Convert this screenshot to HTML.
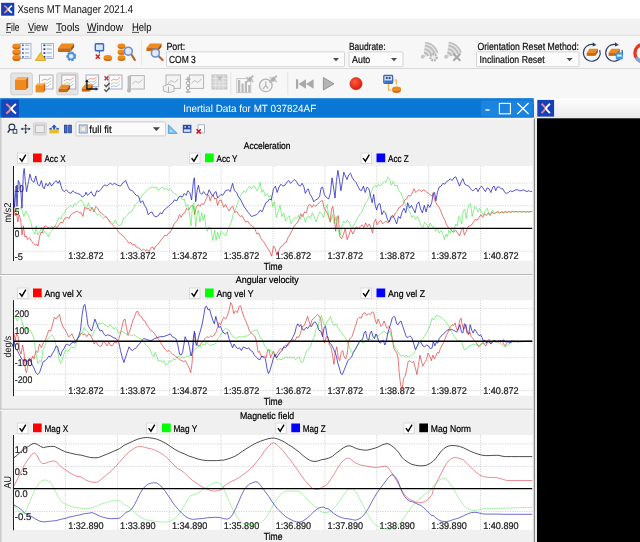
<!DOCTYPE html>
<html><head><meta charset="utf-8"><title>Xsens MT Manager 2021.4</title>
<style>
html,body{margin:0;padding:0;background:#f0f0f0;}
body{width:640px;height:542px;overflow:hidden;}
svg{display:block;font-family:"Liberation Sans",sans-serif;will-change:transform;text-rendering:geometricPrecision;}
</style></head><body>
<svg width="640" height="542" viewBox="0 0 640 542">
<rect x="0" y="0" width="640" height="542" fill="#f0f0f0"/>
<rect x="0" y="0" width="640" height="18.8" fill="#ffffff"/>
<rect x="0" y="18.8" width="640" height="16.6" fill="#f1f1f1"/>
<rect x="0" y="35.4" width="640" height="62.6" fill="#f7f7f7"/>
<line x1="0" y1="35.3" x2="640" y2="35.3" stroke="#e0e0e0" stroke-width="1"/>
<line x1="0" y1="68.5" x2="640" y2="68.5" stroke="#dadada" stroke-width="1"/>
<rect x="1.1" y="2.8" width="13.2" height="12.9" fill="#1440b8"/>
<path d="M4.35,5.55 Q7.01,7.58 7.95,9.25 Q7.01,10.91 4.35,12.95" fill="none" stroke="#e88a90" stroke-width="1.60"/>
<path d="M11.95,5.55 Q9.29,7.58 8.35,9.25 Q9.29,10.91 11.95,12.95" fill="none" stroke="#ffffff" stroke-width="1.60"/>
<text x="17.4" y="13.4" font-size="11.2" fill="#1a1a1a" stroke="#1a1a1a" stroke-width="0.05" text-anchor="start" textLength="115.6" lengthAdjust="spacingAndGlyphs">Xsens MT Manager 2021.4</text>
<text x="6" y="31.4" font-size="11.2" fill="#111" stroke="#111" stroke-width="0.05" text-anchor="start" textLength="13.5" lengthAdjust="spacingAndGlyphs">File</text>
<text x="28" y="31.4" font-size="11.2" fill="#111" stroke="#111" stroke-width="0.05" text-anchor="start" textLength="20" lengthAdjust="spacingAndGlyphs">View</text>
<text x="56" y="31.4" font-size="11.2" fill="#111" stroke="#111" stroke-width="0.05" text-anchor="start" textLength="23.5" lengthAdjust="spacingAndGlyphs">Tools</text>
<text x="87" y="31.4" font-size="11.2" fill="#111" stroke="#111" stroke-width="0.05" text-anchor="start" textLength="36" lengthAdjust="spacingAndGlyphs">Window</text>
<text x="132" y="31.4" font-size="11.2" fill="#111" stroke="#111" stroke-width="0.05" text-anchor="start" textLength="19.5" lengthAdjust="spacingAndGlyphs">Help</text>
<line x1="6" y1="32.4" x2="11" y2="32.4" stroke="#222" stroke-width="0.8"/>
<line x1="28" y1="32.4" x2="34.5" y2="32.4" stroke="#222" stroke-width="0.8"/>
<line x1="56" y1="32.4" x2="61.5" y2="32.4" stroke="#222" stroke-width="0.8"/>
<line x1="87" y1="32.4" x2="96.5" y2="32.4" stroke="#222" stroke-width="0.8"/>
<line x1="132" y1="32.4" x2="139" y2="32.4" stroke="#222" stroke-width="0.8"/>
<text x="166.4" y="49.6" font-size="10.3" fill="#111" stroke="#111" stroke-width="0.22" text-anchor="start" textLength="18.8" lengthAdjust="spacingAndGlyphs">Port:</text>
<rect x="166.5" y="51.9" width="178" height="14.8" fill="#fcfcfc" stroke="#d4d4d4" stroke-width="1" rx="1"/>
<path d="M333,57.9 h6 l-3,3.3 z" fill="#4a4a4a"/>
<text x="169" y="62.7" font-size="10.1" fill="#111" stroke="#111" stroke-width="0.22" text-anchor="start" textLength="26.8" lengthAdjust="spacingAndGlyphs">COM 3</text>
<text x="348.9" y="49.6" font-size="10.3" fill="#111" stroke="#111" stroke-width="0.22" text-anchor="start" textLength="36.6" lengthAdjust="spacingAndGlyphs">Baudrate:</text>
<rect x="349.0" y="51.9" width="54" height="14.8" fill="#fcfcfc" stroke="#d4d4d4" stroke-width="1" rx="1"/>
<path d="M391,57.9 h6 l-3,3.3 z" fill="#4a4a4a"/>
<text x="352" y="62.7" font-size="10.1" fill="#111" stroke="#111" stroke-width="0.22" text-anchor="start" textLength="18.3" lengthAdjust="spacingAndGlyphs">Auto</text>
<text x="477.4" y="49.6" font-size="10.3" fill="#111" stroke="#111" stroke-width="0.22" text-anchor="start" textLength="101.5" lengthAdjust="spacingAndGlyphs">Orientation Reset Method:</text>
<rect x="476.5" y="51.9" width="102.5" height="14.8" fill="#fcfcfc" stroke="#d4d4d4" stroke-width="1" rx="1"/>
<path d="M566.6,57.9 h6 l-3,3.3 z" fill="#4a4a4a"/>
<text x="479.6" y="62.7" font-size="10.1" fill="#111" stroke="#111" stroke-width="0.22" text-anchor="start" textLength="65" lengthAdjust="spacingAndGlyphs">Inclination Reset</text>
<rect x="20" y="43.5" width="11" height="15" fill="#f4f7fc" stroke="#9aa8c4" stroke-width="0.8"/>
<rect x="22" y="44.400000000000006" width="1.8" height="1.8" fill="#4a78c8"/>
<line x1="25" y1="45.2" x2="29.2" y2="45.2" stroke="#8fa4cc" stroke-width="1"/>
<rect x="22" y="48.26666666666667" width="1.8" height="1.8" fill="#4a78c8"/>
<line x1="25" y1="49.06666666666667" x2="29.2" y2="49.06666666666667" stroke="#8fa4cc" stroke-width="1"/>
<rect x="22" y="52.13333333333334" width="1.8" height="1.8" fill="#4a78c8"/>
<line x1="25" y1="52.93333333333334" x2="29.2" y2="52.93333333333334" stroke="#8fa4cc" stroke-width="1"/>
<rect x="22" y="56.00000000000001" width="1.8" height="1.8" fill="#4a78c8"/>
<line x1="25" y1="56.800000000000004" x2="29.2" y2="56.800000000000004" stroke="#8fa4cc" stroke-width="1"/>
<ellipse cx="16.5" cy="46.8" rx="4" ry="2.6" fill="#c96a10"/>
<ellipse cx="16.5" cy="45.6" rx="4" ry="2.1" fill="#f08a1c"/>
<ellipse cx="16.5" cy="52.599999999999994" rx="4" ry="2.6" fill="#c96a10"/>
<ellipse cx="16.5" cy="51.4" rx="4" ry="2.1" fill="#f08a1c"/>
<ellipse cx="16.5" cy="58.4" rx="4" ry="2.6" fill="#c96a10"/>
<ellipse cx="16.5" cy="57.2" rx="4" ry="2.1" fill="#f08a1c"/>
<rect x="41.5" y="43.5" width="12" height="15" fill="#f4f7fc" stroke="#9aa8c4" stroke-width="0.8"/>
<rect x="43.5" y="44.400000000000006" width="1.8" height="1.8" fill="#2a3f7a"/>
<line x1="46.5" y1="45.2" x2="51.7" y2="45.2" stroke="#8fa4cc" stroke-width="1"/>
<rect x="43.5" y="48.26666666666667" width="1.8" height="1.8" fill="#2a3f7a"/>
<line x1="46.5" y1="49.06666666666667" x2="51.7" y2="49.06666666666667" stroke="#8fa4cc" stroke-width="1"/>
<rect x="43.5" y="52.13333333333334" width="1.8" height="1.8" fill="#2a3f7a"/>
<line x1="46.5" y1="52.93333333333334" x2="51.7" y2="52.93333333333334" stroke="#8fa4cc" stroke-width="1"/>
<rect x="43.5" y="56.00000000000001" width="1.8" height="1.8" fill="#2a3f7a"/>
<line x1="46.5" y1="56.800000000000004" x2="51.7" y2="56.800000000000004" stroke="#8fa4cc" stroke-width="1"/>
<path d="M40.6,52.6 L45.8,60.4 L35.4,60.4 Z" fill="#f4c430" stroke="#d09a10" stroke-width="0.8" stroke-linejoin="round"/>
<path d="M61.5,43.5 L74,43.5 L70.5,48.175 L58,48.175 Z" fill="#f08a1c"/>
<path d="M58,48.175 L70.5,48.175 L70.5,52.0 L58,52.0 Z" fill="#c96a10"/>
<path d="M70.5,48.175 L74,43.5 L74,47.325 L70.5,52.0 Z" fill="#a85808"/>
<circle cx="71.2" cy="56.3" r="3.6" fill="none" stroke="#4a8fe0" stroke-width="2.6" stroke-dasharray="2.1 1.2"/>
<circle cx="71.2" cy="56.3" r="3.2" fill="#cfe2f8" stroke="#4a8fe0" stroke-width="1.6"/>
<circle cx="71.2" cy="56.3" r="1.2" fill="#f7f7f7"/>
<rect x="95.3" y="43.8" width="8.2" height="7" fill="#d4e6fa" stroke="#3a66c4" stroke-width="1.4" rx="0.8"/>
<line x1="99.4" y1="51" x2="99.4" y2="53.5" stroke="#3a66c4" stroke-width="1.2"/>
<path d="M95.8,54.6 L99.8,58.8 M99.8,54.6 L95.8,58.8" stroke="#d42020" stroke-width="1.5"/>
<ellipse cx="107.8" cy="58.4" rx="4.1" ry="2.7" fill="#c96a10"/>
<ellipse cx="107.8" cy="57.2" rx="4.1" ry="2.2" fill="#f08a1c"/>
<ellipse cx="121.5" cy="46.599999999999994" rx="3.8" ry="2.5" fill="#c96a10"/>
<ellipse cx="121.5" cy="45.4" rx="3.8" ry="2.0" fill="#f08a1c"/>
<ellipse cx="121.5" cy="52.599999999999994" rx="3.8" ry="2.5" fill="#c96a10"/>
<ellipse cx="121.5" cy="51.4" rx="3.8" ry="2.0" fill="#f08a1c"/>
<ellipse cx="121.5" cy="58.4" rx="3.8" ry="2.5" fill="#c96a10"/>
<ellipse cx="121.5" cy="57.2" rx="3.8" ry="2.0" fill="#f08a1c"/>
<line x1="131.10000000000002" y1="54.0" x2="134.8" y2="59.8" stroke="#b0683a" stroke-width="2.2" stroke-linecap="round"/>
<circle cx="128.3" cy="51.2" r="4" fill="#dce8f8" fill-opacity="0.85" stroke="#6a8fd0" stroke-width="1.6"/>
<line x1="141.5" y1="40" x2="141.5" y2="65" stroke="#e4e4e4" stroke-width="1"/>
<path d="M150.0,43.5 L161.5,43.5 L158.0,47.625 L146.5,47.625 Z" fill="#f08a1c"/>
<path d="M146.5,47.625 L158.0,47.625 L158.0,51.0 L146.5,51.0 Z" fill="#c96a10"/>
<path d="M158.0,47.625 L161.5,43.5 L161.5,46.875 L158.0,51.0 Z" fill="#a85808"/>
<line x1="158.20000000000002" y1="55.8" x2="162.6" y2="60" stroke="#b0683a" stroke-width="2.2" stroke-linecap="round"/>
<circle cx="155.4" cy="53" r="4" fill="#dce8f8" fill-opacity="0.85" stroke="#6a8fd0" stroke-width="1.6"/>
<path d="M423.3,57.5 L425.2,42.1 A15.6,15.6 0 0 1 438.3,53.1 Z" fill="#e2e2e2"/>
<path d="M424.0,52.5 A5,5 0 0 1 428.1,56.0" fill="none" stroke="#bdbdbd" stroke-width="1.8"/>
<path d="M424.5,49.1 A8.5,8.5 0 0 1 431.4,54.9" fill="none" stroke="#bdbdbd" stroke-width="1.8"/>
<path d="M425.0,45.6 A12,12 0 0 1 434.7,53.8" fill="none" stroke="#bdbdbd" stroke-width="1.8"/>
<path d="M425.4,42.5 A15.2,15.2 0 0 1 437.7,52.8" fill="none" stroke="#bdbdbd" stroke-width="1.6"/>
<circle cx="422.7" cy="56.7" r="2" fill="#c6c6c6"/>
<circle cx="433.5" cy="57.4" r="3.1" fill="#ececec" stroke="#b0b0b0" stroke-width="2.2" stroke-dasharray="1.7 0.9"/>
<path d="M446.7,57.5 L448.6,42.1 A15.6,15.6 0 0 1 461.7,53.1 Z" fill="#e2e2e2"/>
<path d="M447.4,52.5 A5,5 0 0 1 451.4,56.0" fill="none" stroke="#bdbdbd" stroke-width="1.8"/>
<path d="M447.9,49.1 A8.5,8.5 0 0 1 454.8,54.9" fill="none" stroke="#bdbdbd" stroke-width="1.8"/>
<path d="M448.4,45.6 A12,12 0 0 1 458.1,53.8" fill="none" stroke="#bdbdbd" stroke-width="1.8"/>
<path d="M448.8,42.5 A15.2,15.2 0 0 1 461.1,52.8" fill="none" stroke="#bdbdbd" stroke-width="1.6"/>
<circle cx="446.09999999999997" cy="56.7" r="2" fill="#c6c6c6"/>
<path d="M453.3,53.8 L460.3,60.8 M460.3,53.8 L453.3,60.8" stroke="#a8a8a8" stroke-width="2.2"/>
<path d="M593.26,44.53 A8.4,8.4 0 1 0 599.69,49.93" fill="none" stroke="#2c3e66" stroke-width="1.15"/>
<path d="M592.66,42.33 L596.46,45.03 L592.66,46.53 Z" fill="#2c3e66"/>
<path d="M589.5,48.7 L597.9000000000001,48.7 L595.1000000000001,52.660000000000004 L586.7,52.660000000000004 Z" fill="#f08a1c"/>
<path d="M586.7,52.660000000000004 L595.1000000000001,52.660000000000004 L595.1000000000001,55.900000000000006 L586.7,55.900000000000006 Z" fill="#c96a10"/>
<path d="M595.1000000000001,52.660000000000004 L597.9000000000001,48.7 L597.9000000000001,51.940000000000005 L595.1000000000001,55.900000000000006 Z" fill="#a85808"/>
<path d="M615.56,44.53 A8.4,8.4 0 1 0 621.99,49.93" fill="none" stroke="#2c3e66" stroke-width="1.15"/>
<path d="M614.96,42.33 L618.76,45.03 L614.96,46.53 Z" fill="#2c3e66"/>
<path d="M611.4,48.7 L619.8000000000001,48.7 L617.0000000000001,52.660000000000004 L608.6,52.660000000000004 Z" fill="#f08a1c"/>
<path d="M608.6,52.660000000000004 L617.0000000000001,52.660000000000004 L617.0000000000001,55.900000000000006 L608.6,55.900000000000006 Z" fill="#c96a10"/>
<path d="M617.0000000000001,52.660000000000004 L619.8000000000001,48.7 L619.8000000000001,51.940000000000005 L617.0000000000001,55.900000000000006 Z" fill="#a85808"/>
<rect x="615.8" y="52.4" width="7" height="7" fill="#3a9ae8" rx="0.8"/>
<rect x="617" y="54.6" width="4.6" height="2" fill="#e8f2fc"/>
<circle cx="643.5" cy="53" r="8.6" fill="none" stroke="#e23a26" stroke-width="3.4"/>
<path d="M636.2,57.5 A8.6,8.6 0 0 0 643.5,61.6" fill="none" stroke="#7fa8e0" stroke-width="3.4"/>
<rect x="10.8" y="73" width="21.5" height="21.8" fill="#e4e4e4" stroke="#cfcfcf" stroke-width="1" rx="1.5"/>
<path d="M17.64,77 L28.2,77 L25.56,79.86 L15,79.86 Z" fill="#f8b060"/>
<path d="M15,79.86 L25.56,79.86 L25.56,90 L15,90 Z" fill="#f08a1c"/>
<path d="M25.56,79.86 L28.2,77 L28.2,87.14 L25.56,90 Z" fill="#c96a10"/>
<rect x="39.5" y="75" width="13.5" height="14" fill="#fbfbfd" stroke="#a9adb8" stroke-width="1"/>
<path d="M41.5,80.88 L44.225,79.2 L47.6,80.04 L51.0,77.52" fill="none" stroke="#e8a090" stroke-width="1"/>
<path d="M41.5,84.24 L44.225,82.84 L47.6,83.4 L51.0,80.6" fill="none" stroke="#b8d8a0" stroke-width="1"/>
<path d="M41.5,87.03999999999999 L44.225,85.92 L47.6,86.48 L51.0,83.68" fill="none" stroke="#a8c4e8" stroke-width="1"/>
<path d="M37.52,83.2 L45.2,83.2 L43.28,85.224 L35.6,85.224 Z" fill="#f8b060"/>
<path d="M35.6,85.224 L43.28,85.224 L43.28,92.4 L35.6,92.4 Z" fill="#f08a1c"/>
<path d="M43.28,85.224 L45.2,83.2 L45.2,90.376 L43.28,92.4 Z" fill="#c96a10"/>
<rect x="56.8" y="73" width="21.2" height="21.8" fill="#e4e4e4" stroke="#cfcfcf" stroke-width="1" rx="1.5"/>
<rect x="61.8" y="75" width="14" height="14" fill="#fbfbfd" stroke="#a9adb8" stroke-width="1"/>
<path d="M63.8,80.88 L66.7,79.2 L70.2,80.04 L73.8,77.52" fill="none" stroke="#e8a090" stroke-width="1"/>
<path d="M63.8,84.24 L66.7,82.84 L70.2,83.4 L73.8,80.6" fill="none" stroke="#b8d8a0" stroke-width="1"/>
<path d="M63.8,87.03999999999999 L66.7,85.92 L70.2,86.48 L73.8,83.68" fill="none" stroke="#a8c4e8" stroke-width="1"/>
<path d="M61.6,84.8 L70.1,84.8 L67.1,88.87 L58.6,88.87 Z" fill="#f08a1c"/>
<path d="M58.6,88.87 L67.1,88.87 L67.1,92.2 L58.6,92.2 Z" fill="#c96a10"/>
<path d="M67.1,88.87 L70.1,84.8 L70.1,88.13 L67.1,92.2 Z" fill="#a85808"/>
<rect x="86" y="75" width="12.6" height="11.6" fill="#fbfbfd" stroke="#a9adb8" stroke-width="1"/>
<path d="M88,79.872 L90.41,78.48 L93.56,79.176 L96.6,77.088" fill="none" stroke="#e8a090" stroke-width="1"/>
<path d="M88,82.656 L90.41,81.496 L93.56,81.96 L96.6,79.64" fill="none" stroke="#b8d8a0" stroke-width="1"/>
<path d="M88,84.976 L90.41,84.048 L93.56,84.512 L96.6,82.19200000000001" fill="none" stroke="#a8c4e8" stroke-width="1"/>
<path d="M84.8,84.6 L92.6,84.6 L89.6,88.44999999999999 L81.8,88.44999999999999 Z" fill="#f08a1c"/>
<path d="M81.8,88.44999999999999 L89.6,88.44999999999999 L89.6,91.6 L81.8,91.6 Z" fill="#c96a10"/>
<path d="M89.6,88.44999999999999 L92.6,84.6 L92.6,87.75 L89.6,91.6 Z" fill="#a85808"/>
<path d="M86.9,80.4 L86.9,89 L97,89" fill="none" stroke="#111" stroke-width="1.3"/>
<path d="M85.2,82 L86.9,79.2 L88.6,82 Z" fill="#111"/>
<path d="M95.6,87.2 L98.6,89 L95.6,90.8 Z" fill="#1a2a8a"/>
<rect x="109" y="75" width="13" height="14" fill="#fbfbfd" stroke="#a9adb8" stroke-width="1"/>
<path d="M111,80.88 L113.55,79.2 L116.8,80.04 L120,77.52" fill="none" stroke="#e8a090" stroke-width="1"/>
<path d="M111,84.24 L113.55,82.84 L116.8,83.4 L120,80.6" fill="none" stroke="#b8d8a0" stroke-width="1"/>
<path d="M111,87.03999999999999 L113.55,85.92 L116.8,86.48 L120,83.68" fill="none" stroke="#a8c4e8" stroke-width="1"/>
<path d="M104.6,76.2 L108.4,80.2 M108.4,76.2 L104.6,80.2" stroke="#c23a4a" stroke-width="1.5"/>
<path d="M104.4,84.6 L106.2,86.6 L109.6,83" fill="none" stroke="#555" stroke-width="1.4"/>
<path d="M104.4,89.4 L106.2,91.4 L109.6,87.8" fill="none" stroke="#555" stroke-width="1.4"/>
<rect x="130.5" y="75.6" width="13.8" height="13.4" fill="#f4f4f4" stroke="#b4b4b4" stroke-width="1"/>
<path d="M132.5,83.90799999999999 L135.33,81.228 L138.78,82.97 L142.3,79.61999999999999" fill="none" stroke="#bdbdbd" stroke-width="1"/>
<rect x="127.6" y="75.6" width="2.8" height="14" fill="#bdbdbd" rx="1.2"/>
<circle cx="129" cy="90.6" r="2.1" fill="#b8b8b8"/>
<rect x="166" y="75" width="14.4" height="13.4" fill="#f4f4f4" stroke="#b4b4b4" stroke-width="1"/>
<path d="M168,83.30799999999999 L171.04,80.628 L174.64,82.37 L178.4,79.02" fill="none" stroke="#bdbdbd" stroke-width="1"/>
<path d="M163.4,86.4 L168.4,84 L174,86 L174,91.4 L168.6,92.6 L163.4,91 Z" fill="#f2f2f2" stroke="#b4b4b4" stroke-width="1"/>
<path d="M168.5,86.6 L168.5,92.4" stroke="#b4b4b4" stroke-width="1"/>
<rect x="189.4" y="75" width="14.2" height="13.4" fill="#f4f4f4" stroke="#b4b4b4" stroke-width="1"/>
<path d="M191.4,83.30799999999999 L194.37,80.628 L197.92000000000002,82.37 L201.6,79.02" fill="none" stroke="#bdbdbd" stroke-width="1"/>
<path d="M188,76.8 L188,92 M185.6,79.4 L190.4,79.4 M185.8,92 L190.4,92" stroke="#adadad" stroke-width="1.4" fill="none"/>
<circle cx="188" cy="83.2" r="1.7" fill="#f4f4f4" stroke="#adadad" stroke-width="1"/>
<circle cx="188" cy="88" r="1.7" fill="#f4f4f4" stroke="#adadad" stroke-width="1"/>
<rect x="212" y="75" width="14.8" height="14" fill="#d4d4d4" stroke="#c2c2c2" stroke-width="1"/>
<line x1="212" y1="78.5" x2="226.8" y2="78.5" stroke="#e8e8e8" stroke-width="0.8"/>
<line x1="215.7" y1="75" x2="215.7" y2="89" stroke="#e8e8e8" stroke-width="0.8"/>
<line x1="212" y1="82.0" x2="226.8" y2="82.0" stroke="#e8e8e8" stroke-width="0.8"/>
<line x1="219.4" y1="75" x2="219.4" y2="89" stroke="#e8e8e8" stroke-width="0.8"/>
<line x1="212" y1="85.5" x2="226.8" y2="85.5" stroke="#e8e8e8" stroke-width="0.8"/>
<line x1="223.1" y1="75" x2="223.1" y2="89" stroke="#e8e8e8" stroke-width="0.8"/>
<path d="M217,76.5 L222.6,76.5 L219.8,81 Z" fill="#bcbcbc"/>
<line x1="230.8" y1="72" x2="230.8" y2="95" stroke="#e4e4e4" stroke-width="1"/>
<rect x="238" y="80" width="2.2" height="12.400000000000006" fill="#b8b8b8"/>
<rect x="241.4" y="83.6" width="2.2" height="8.800000000000011" fill="#b8b8b8"/>
<rect x="244.8" y="81.4" width="2.2" height="11.0" fill="#b8b8b8"/>
<rect x="248.2" y="85" width="2.2" height="7.400000000000006" fill="#b8b8b8"/>
<rect x="236.8" y="78.6" width="14" height="14" fill="none" stroke="#c2c2c2" stroke-width="0.9"/>
<path d="M246,82.6 L253.4,75.6" stroke="#b4b4b4" stroke-width="1.6"/>
<rect x="247.8" y="77.39999999999999" width="4" height="4" fill="#b0b0b0" transform="rotate(45 249.8 79.39999999999999)"/>
<path d="M246.4,77.0 L248.2,78.8 M251.6,80.19999999999999 L253.4,82.0" stroke="#c0c0c0" stroke-width="1.5"/>
<circle cx="265.8" cy="85.4" r="6.3" fill="#f4f4f4" stroke="#b4b4b4" stroke-width="1.3"/>
<path d="M265.8,81.2 L265.8,85.6 L262.8,89 M265.8,85.6 L268.2,88.4" fill="none" stroke="#b4b4b4" stroke-width="1.2"/>
<path d="M269.4,82.6 L276.79999999999995,75.6" stroke="#b4b4b4" stroke-width="1.6"/>
<rect x="271.2" y="77.39999999999999" width="4" height="4" fill="#b0b0b0" transform="rotate(45 273.2 79.39999999999999)"/>
<path d="M269.79999999999995,77.0 L271.59999999999997,78.8 M275.0,80.19999999999999 L276.79999999999995,82.0" stroke="#c0c0c0" stroke-width="1.5"/>
<line x1="287.8" y1="72" x2="287.8" y2="95" stroke="#e4e4e4" stroke-width="1"/>
<rect x="296" y="79.3" width="2.2" height="9.4" fill="#a9a9a9"/>
<path d="M306,79.3 L306,88.7 L298.4,84 Z" fill="#a9a9a9"/>
<path d="M313.6,79.3 L313.6,88.7 L306,84 Z" fill="#a9a9a9"/>
<path d="M323.4,77.6 L323.4,90 L334,83.8 Z" fill="#b4b4b4" stroke="#8e8e8e" stroke-width="0.9" stroke-linejoin="round"/>
<defs><radialGradient id="rec" cx="0.4" cy="0.35" r="0.7"><stop offset="0" stop-color="#ff5a3a"/><stop offset="1" stop-color="#d81808"/></radialGradient></defs>
<circle cx="356" cy="83.7" r="6.1" fill="url(#rec)" stroke="#c8200c" stroke-width="0.6"/>
<rect x="383.8" y="75.5" width="8.8" height="7.8" fill="#e4eefb" stroke="#3a66c4" stroke-width="1.3" rx="0.8"/>
<rect x="384.4" y="80.4" width="7.6" height="2.6" fill="#3a72d0"/>
<rect x="385.8" y="77" width="2" height="2.2" fill="#44506a"/>
<rect x="388.6" y="77" width="2" height="2.2" fill="#44506a"/>
<path d="M388.4,84 L388.4,90.2 L391.4,90.2 M393,80 L396.4,80 L396.4,84.6" fill="none" stroke="#f2b45c" stroke-width="1.2"/>
<ellipse cx="396.6" cy="90.0" rx="4.4" ry="2.9" fill="#c96a10"/>
<ellipse cx="396.6" cy="88.8" rx="4.4" ry="2.4" fill="#f08a1c"/>
<rect x="0" y="98.2" width="533.8" height="19.5" fill="#0a77d5" rx="1.5"/>
<rect x="0" y="104" width="533.8" height="13.7" fill="#0a77d5"/>
<rect x="481" y="100.4" width="51.6" height="16" fill="#1c83de" rx="2"/>
<rect x="0" y="98.2" width="533.8" height="1" fill="#2d8adc"/>
<rect x="1.2" y="99.6" width="17.8" height="18" fill="#1248bc"/>
<path d="M6.30,104.05 Q9.66,106.64 10.90,108.75 Q9.66,110.86 6.30,113.45" fill="none" stroke="#e88a90" stroke-width="2.00"/>
<path d="M15.90,104.05 Q12.54,106.64 11.30,108.75 Q12.54,110.86 15.90,113.45" fill="none" stroke="#ffffff" stroke-width="2.00"/>
<text x="183.2" y="112.4" font-size="10.4" fill="#fff" stroke="#fff" stroke-width="0" text-anchor="start" textLength="133" lengthAdjust="spacingAndGlyphs">Inertial Data for MT 037824AF</text>
<line x1="485.4" y1="110" x2="489.6" y2="110" stroke="#fff" stroke-width="1.4"/>
<rect x="499.4" y="103.4" width="11" height="10.4" fill="none" stroke="#fff" stroke-width="1.1"/>
<path d="M517.3,103 L528.6,114 M528.6,103 L517.3,114" stroke="#fff" stroke-width="1.2" fill="none"/>
<defs><linearGradient id="g2" x1="0" y1="0" x2="0" y2="1"><stop offset="0" stop-color="#ffffff"/><stop offset="1" stop-color="#e9e9e9"/></linearGradient></defs>
<rect x="534.9" y="98" width="106" height="20.4" fill="url(#g2)"/>
<rect x="537.3" y="99.9" width="16.8" height="16.7" fill="#1440b8"/>
<path d="M541.55,103.70 Q544.49,106.29 545.55,108.40 Q544.49,110.52 541.55,113.10" fill="none" stroke="#e88a90" stroke-width="1.90"/>
<path d="M549.95,103.70 Q547.01,106.29 545.95,108.40 Q547.01,110.52 549.95,113.10" fill="none" stroke="#ffffff" stroke-width="1.90"/>
<rect x="536.9" y="118.3" width="104" height="424" fill="#000"/>
<rect x="534.9" y="118.3" width="2" height="424" fill="#eeeeee"/>
<rect x="533.8" y="117.8" width="1.1" height="424.4" fill="#7a7a7a"/>
<rect x="0" y="117.8" width="534.5" height="1.4" fill="#f9f9f9"/>
<rect x="0" y="118" width="1.5" height="424" fill="#c9c9c9"/>
<line x1="10" y1="129.2" x2="7.8" y2="132.6" stroke="#26324e" stroke-width="1.5"/>
<circle cx="11.9" cy="127" r="2.9" fill="#f2f4f8" stroke="#26324e" stroke-width="1.1"/>
<rect x="13.2" y="129.6" width="3.6" height="3.6" fill="#fafafa" stroke="#26324e" stroke-width="0.9"/>
<path d="M21.6,128.9 L29.8,128.9 M25.7,124.8 L25.7,133" stroke="#26324e" stroke-width="0.9" fill="none"/>
<path d="M25.7,123.9 L27.1,126 L24.3,126 Z M25.7,133.9 L27.1,131.8 L24.3,131.8 Z M20.7,128.9 L22.8,127.5 L22.8,130.3 Z M30.7,128.9 L28.6,127.5 L28.6,130.3 Z" fill="#26324e"/>
<rect x="33.4" y="122.8" width="13" height="12.2" fill="#e0e0e0" stroke="#d0d0d0" stroke-width="0.8" rx="1"/>
<rect x="35.4" y="125.2" width="9" height="7.4" fill="#ececec" stroke="#bdbdbd" stroke-width="1"/>
<rect x="49.4" y="129.6" width="9.4" height="3.8" fill="#e6bc2e"/>
<path d="M54.1,124.6 L57,127.4 L55.1,127.4 L55.1,129.6 L53.1,129.6 L53.1,127.4 L51.2,127.4 Z" fill="#2a56c0"/>
<rect x="49.4" y="128" width="2.4" height="1.6" fill="#2a56c0"/>
<rect x="56.4" y="128" width="2.4" height="1.6" fill="#2a56c0"/>
<rect x="64.5" y="125.2" width="2.6" height="7.6" fill="#3f6fd0" stroke="#1e3a8a" stroke-width="0.8"/>
<rect x="68.7" y="125.2" width="2.6" height="7.6" fill="#3f6fd0" stroke="#1e3a8a" stroke-width="0.8"/>
<rect x="76" y="121.9" width="89.6" height="14" fill="#fbfbfb" stroke="#cdcdcd" stroke-width="1" rx="1"/>
<rect x="79.2" y="125" width="8" height="8" fill="#dce6f4" stroke="#6f8fc8" stroke-width="1"/>
<rect x="81" y="126.8" width="4.4" height="4.4" fill="#f6efdc" stroke="#c8b88a" stroke-width="0.6"/>
<text x="89.3" y="132.6" font-size="10.5" fill="#111" stroke="#111" stroke-width="0.22" text-anchor="start" textLength="22.3" lengthAdjust="spacingAndGlyphs">full fit</text>
<path d="M152.8,127.2 h7.2 l-3.6,3.8 z" fill="#444"/>
<path d="M168.4,124.8 L168.4,133.4 L177.2,133.4 Z" fill="#7cc0f0" stroke="#4a9ad8" stroke-width="0.8"/>
<path d="M170.2,129.4 L170.2,131.8 L172.6,131.8 Z" fill="#f5f5f5"/>
<rect x="182.8" y="124.8" width="8.6" height="8" fill="#2a4aa8"/>
<rect x="183.8" y="129.4" width="6.6" height="2.4" fill="#dfe8f8"/>
<rect x="184.4" y="126.2" width="1.6" height="1.4" fill="#dfe8f8"/>
<rect x="188.2" y="126.2" width="1.6" height="1.4" fill="#dfe8f8"/>
<rect x="198" y="124.8" width="6.4" height="8.2" fill="#fdfdfd" stroke="#9aa4b8" stroke-width="0.8"/>
<path d="M196.6,129.2 L200.8,133.4 M200.8,129.2 L196.6,133.4" stroke="#d01818" stroke-width="1.5"/>
<text x="243.75" y="148.5" font-size="9.7" fill="#000" stroke="#000" stroke-width="0.22" text-anchor="start" textLength="46.75" lengthAdjust="spacingAndGlyphs">Acceleration</text>
<rect x="17.5" y="153.0" width="10.5" height="10.5" fill="#ffffff" stroke="#d9d9d9" stroke-width="1"/>
<path d="M19.6,158.1 L21.9,161.1 L25.8,154.7" fill="none" stroke="#000" stroke-width="1.45" stroke-linejoin="miter"/>
<rect x="33" y="153.5" width="8.7" height="8.7" fill="#ff0000"/>
<text x="44.5" y="161.8" font-size="9.7" fill="#000" stroke="#000" stroke-width="0.22" text-anchor="start" textLength="21" lengthAdjust="spacingAndGlyphs">Acc X</text>
<rect x="189.5" y="153.0" width="10.5" height="10.5" fill="#ffffff" stroke="#d9d9d9" stroke-width="1"/>
<path d="M191.6,158.1 L193.9,161.1 L197.8,154.7" fill="none" stroke="#000" stroke-width="1.45" stroke-linejoin="miter"/>
<rect x="205" y="153.5" width="8.7" height="8.7" fill="#00ff00"/>
<text x="216.5" y="161.8" font-size="9.7" fill="#000" stroke="#000" stroke-width="0.22" text-anchor="start" textLength="21" lengthAdjust="spacingAndGlyphs">Acc Y</text>
<rect x="361.0" y="153.0" width="10.5" height="10.5" fill="#ffffff" stroke="#d9d9d9" stroke-width="1"/>
<path d="M363.1,158.1 L365.4,161.1 L369.3,154.7" fill="none" stroke="#000" stroke-width="1.45" stroke-linejoin="miter"/>
<rect x="376.5" y="153.5" width="8.7" height="8.7" fill="#0000ff"/>
<text x="388.0" y="161.8" font-size="9.7" fill="#000" stroke="#000" stroke-width="0.22" text-anchor="start" textLength="20.7" lengthAdjust="spacingAndGlyphs">Acc Z</text>
<rect x="13.0" y="166" width="519.5" height="94.60000000000002" fill="#ffffff"/>
<line x1="65.5" y1="166" x2="65.5" y2="260.6" stroke="#d4d4d4" stroke-width="1" stroke-dasharray="1.2 1.2"/>
<line x1="117.375" y1="166" x2="117.375" y2="260.6" stroke="#d4d4d4" stroke-width="1" stroke-dasharray="1.2 1.2"/>
<line x1="169.25" y1="166" x2="169.25" y2="260.6" stroke="#d4d4d4" stroke-width="1" stroke-dasharray="1.2 1.2"/>
<line x1="221.125" y1="166" x2="221.125" y2="260.6" stroke="#d4d4d4" stroke-width="1" stroke-dasharray="1.2 1.2"/>
<line x1="273.0" y1="166" x2="273.0" y2="260.6" stroke="#d4d4d4" stroke-width="1" stroke-dasharray="1.2 1.2"/>
<line x1="324.875" y1="166" x2="324.875" y2="260.6" stroke="#d4d4d4" stroke-width="1" stroke-dasharray="1.2 1.2"/>
<line x1="376.75" y1="166" x2="376.75" y2="260.6" stroke="#d4d4d4" stroke-width="1" stroke-dasharray="1.2 1.2"/>
<line x1="428.625" y1="166" x2="428.625" y2="260.6" stroke="#d4d4d4" stroke-width="1" stroke-dasharray="1.2 1.2"/>
<line x1="480.5" y1="166" x2="480.5" y2="260.6" stroke="#d4d4d4" stroke-width="1" stroke-dasharray="1.2 1.2"/>
<line x1="13.0" y1="183.1" x2="532.5" y2="183.1" stroke="#d4d4d4" stroke-width="1" stroke-dasharray="1.2 1.2"/>
<line x1="13.0" y1="205.8" x2="532.5" y2="205.8" stroke="#d4d4d4" stroke-width="1" stroke-dasharray="1.2 1.2"/>
<line x1="13.0" y1="251.2" x2="532.5" y2="251.2" stroke="#d4d4d4" stroke-width="1" stroke-dasharray="1.2 1.2"/>
<text x="14.8" y="191.79999999999998" font-size="9.7" fill="#222" stroke="#222" stroke-width="0.22" text-anchor="start" textLength="8.8" lengthAdjust="spacingAndGlyphs">10</text>
<text x="14.8" y="214.5" font-size="9.7" fill="#222" stroke="#222" stroke-width="0.22" text-anchor="start" textLength="4.6" lengthAdjust="spacingAndGlyphs">5</text>
<text x="14.8" y="237.1" font-size="9.7" fill="#222" stroke="#222" stroke-width="0.22" text-anchor="start" textLength="4.6" lengthAdjust="spacingAndGlyphs">0</text>
<text x="14.8" y="259.9" font-size="9.7" fill="#222" stroke="#222" stroke-width="0.22" text-anchor="start" textLength="8.2" lengthAdjust="spacingAndGlyphs">-5</text>
<text x="68.2" y="259.3" font-size="9.7" fill="#222" stroke="#222" stroke-width="0.22" text-anchor="start" textLength="35.5" lengthAdjust="spacingAndGlyphs">1:32.872</text>
<text x="120.075" y="259.3" font-size="9.7" fill="#222" stroke="#222" stroke-width="0.22" text-anchor="start" textLength="35.5" lengthAdjust="spacingAndGlyphs">1:33.872</text>
<text x="171.95" y="259.3" font-size="9.7" fill="#222" stroke="#222" stroke-width="0.22" text-anchor="start" textLength="35.5" lengthAdjust="spacingAndGlyphs">1:34.872</text>
<text x="223.825" y="259.3" font-size="9.7" fill="#222" stroke="#222" stroke-width="0.22" text-anchor="start" textLength="35.5" lengthAdjust="spacingAndGlyphs">1:35.872</text>
<text x="275.7" y="259.3" font-size="9.7" fill="#222" stroke="#222" stroke-width="0.22" text-anchor="start" textLength="35.5" lengthAdjust="spacingAndGlyphs">1:36.872</text>
<text x="327.575" y="259.3" font-size="9.7" fill="#222" stroke="#222" stroke-width="0.22" text-anchor="start" textLength="35.5" lengthAdjust="spacingAndGlyphs">1:37.872</text>
<text x="379.45" y="259.3" font-size="9.7" fill="#222" stroke="#222" stroke-width="0.22" text-anchor="start" textLength="35.5" lengthAdjust="spacingAndGlyphs">1:38.872</text>
<text x="431.325" y="259.3" font-size="9.7" fill="#222" stroke="#222" stroke-width="0.22" text-anchor="start" textLength="35.5" lengthAdjust="spacingAndGlyphs">1:39.872</text>
<text x="483.2" y="259.3" font-size="9.7" fill="#222" stroke="#222" stroke-width="0.22" text-anchor="start" textLength="35.5" lengthAdjust="spacingAndGlyphs">1:40.872</text>
<clipPath id="cp1"><rect x="13.0" y="166" width="519.5" height="94.60000000000002"/></clipPath>
<g clip-path="url(#cp1)" fill="none" stroke-linejoin="round">
<path d="M13.7,207.3 L15.2,215.6 L16.5,212.8 L17.8,222.1 L19.2,214.7 L20.7,220.2 L22.0,235.0 L23.3,225.8 L24.8,236.8 L26.2,235.9 L27.5,239.6 L29.4,237.8 L31.2,240.5 L33.1,243.3 L34.9,245.1 L36.8,244.2 L38.0,246.1 L39.5,236.8 L41.0,232.2 L42.3,233.1 L44.1,226.7 L46.0,225.8 L47.8,227.6 L49.7,228.5 L51.5,226.7 L53.4,227.6 L55.2,225.8 L57.1,227.6 L58.9,224.8 L60.8,222.1 L62.6,223.0 L64.5,218.4 L67.2,217.4 L69.1,218.4 L70.9,214.7 L73.7,212.8 L75.5,211.9 L77.4,211.0 L79.2,212.8 L81.1,212.8 L82.9,216.5 L84.8,207.3 L86.6,209.1 L88.4,208.2 L90.3,211.0 L92.1,207.3 L94.0,211.9 L95.8,206.4 L97.7,208.2 L99.5,211.9 L101.4,212.8 L103.2,214.7 L105.0,216.5 L106.9,217.4 L109.7,222.1 L112.4,224.8 L114.3,226.7 L117.0,229.4 L118.7,232.2 L120.5,234.1 L123.3,235.9 L125.2,238.7 L127.0,240.5 L128.8,243.3 L130.7,242.4 L132.5,245.1 L134.4,244.2 L136.2,247.0 L138.1,247.9 L139.9,248.8 L141.8,250.7 L143.6,248.8 L145.4,250.7 L147.3,249.7 L149.1,251.6 L151.0,247.9 L152.8,247.0 L154.1,249.7 L155.6,246.1 L157.4,245.1 L159.3,242.4 L161.1,239.6 L163.0,237.8 L164.8,235.0 L166.7,235.9 L168.5,233.1 L170.4,232.2 L172.2,228.5 L174.1,223.9 L175.9,222.1 L177.8,219.3 L179.6,214.7 L181.1,217.4 L182.9,213.8 L184.8,212.8 L186.6,208.2 L188.5,210.1 L190.3,207.3 L192.2,205.4 L193.4,206.4 L194.7,214.7 L196.2,207.3 L198.1,204.5 L199.9,206.4 L201.7,203.6 L203.6,204.5 L205.4,200.8 L207.3,196.2 L208.8,195.3 L210.2,200.8 L211.7,196.2 L213.2,195.3 L214.7,199.0 L216.1,198.1 L217.6,205.4 L219.3,200.8 L221.1,199.9 L223.7,207.3 L225.5,204.5 L227.4,208.2 L229.2,211.0 L231.1,207.3 L232.9,206.4 L234.8,212.8 L236.6,211.0 L238.5,214.7 L240.3,216.5 L242.2,215.6 L244.0,219.3 L245.8,222.1 L247.7,221.1 L249.5,223.9 L251.4,225.8 L253.2,226.7 L255.1,229.4 L256.9,234.1 L258.8,233.1 L260.6,237.8 L262.4,240.5 L264.3,242.4 L266.1,246.1 L268.0,248.8 L269.8,251.6 L271.7,256.2 L273.5,246.1 L275.0,247.9 L276.9,255.3 L278.7,250.7 L280.5,247.0 L282.4,246.1 L284.2,243.3 L286.1,242.4 L287.9,237.8 L289.8,235.0 L291.6,231.3 L293.5,227.6 L295.3,224.8 L297.1,223.0 L299.0,219.3 L300.8,213.8 L302.7,216.5 L304.5,211.9 L306.4,212.8 L308.2,205.4 L310.1,204.5 L311.9,207.3 L313.8,204.5 L315.6,206.4 L317.4,204.5 L319.3,202.7 L321.1,200.8 L322.6,200.8 L324.3,209.1 L326.1,211.0 L328.7,216.5 L330.2,222.1 L331.5,209.1 L332.8,206.4 L334.2,216.5 L335.7,231.3 L337.2,218.4 L338.3,215.6 L339.8,236.8 L341.6,238.7 L343.5,234.1 L345.3,228.5 L347.1,239.6 L349.0,235.0 L350.8,229.4 L352.7,234.1 L354.5,230.4 L356.4,226.7 L358.2,228.5 L360.1,226.7 L361.9,224.8 L363.8,227.6 L365.6,223.0 L367.4,226.7 L369.3,223.9 L371.1,228.5 L372.6,233.1 L374.1,222.1 L375.6,219.3 L377.1,224.8 L378.9,222.1 L380.7,220.2 L382.6,223.9 L384.4,222.1 L386.3,221.1 L388.1,223.0 L390.0,220.2 L391.8,217.4 L393.7,216.5 L395.5,212.8 L397.4,211.0 L399.2,207.3 L401.0,206.4 L402.9,204.5 L404.7,199.9 L406.6,199.0 L408.4,195.3 L410.3,196.2 L412.1,193.4 L414.0,188.8 L415.8,192.5 L417.6,190.7 L419.5,189.8 L421.3,191.6 L423.2,189.8 L425.0,190.7 L426.9,192.5 L428.7,193.4 L430.6,195.3 L432.4,196.2 L433.3,192.5 L434.6,199.9 L435.9,202.7 L437.4,205.4 L439.2,207.3 L441.1,211.9 L442.9,216.5 L444.8,220.2 L446.6,224.8 L448.5,227.6 L450.3,229.4 L452.1,231.3 L454.0,232.2 L455.8,230.4 L457.7,233.1 L459.5,235.9 L461.4,230.4 L462.9,227.6 L464.3,235.0 L466.2,231.3 L468.0,226.7 L469.9,225.8 L471.7,224.8 L473.6,222.1 L475.4,219.3 L477.2,220.2 L479.1,217.4 L480.9,214.7 L482.8,217.4 L484.6,213.8 L486.5,215.6 L488.3,212.8 L490.2,215.6 L492.0,211.9 L493.9,213.8 L495.7,212.8 L497.6,211.9 L499.4,213.2 L501.2,211.9 L503.1,212.8 L504.9,211.9 L506.8,212.5 L508.6,211.4 L510.5,212.5 L512.3,211.4 L514.2,212.1 L516.0,211.4 L517.9,212.1 L519.7,211.5 L521.5,212.1 L523.4,211.5 L525.2,212.1 L527.1,211.5 L528.9,212.1 L530.8,211.4 L532.4,211.7" stroke="#e02828" stroke-width="1" stroke-opacity="0.64"/>
<path d="M13.7,206.4 L15.5,209.1 L17.4,211.9 L19.2,209.1 L20.7,207.3 L22.6,211.9 L23.8,216.5 L25.7,211.0 L27.5,213.8 L29.4,218.4 L31.2,223.9 L33.1,231.3 L34.9,234.1 L36.2,225.8 L37.7,235.0 L39.5,232.2 L41.4,227.6 L43.2,233.1 L45.1,231.3 L46.9,234.1 L48.4,236.8 L49.7,233.1 L51.5,231.3 L53.4,228.5 L55.2,225.8 L57.1,222.1 L58.9,217.4 L60.8,219.3 L62.6,214.7 L64.5,212.8 L66.3,209.1 L68.7,207.3 L70.9,205.4 L72.8,207.3 L74.6,203.6 L76.4,204.5 L78.3,201.8 L81.1,199.9 L82.9,202.7 L84.8,206.4 L86.6,208.2 L88.4,202.7 L89.7,207.3 L92.1,208.2 L94.0,210.1 L95.8,212.8 L97.7,215.6 L99.5,213.8 L101.4,216.5 L103.2,218.4 L106.0,216.5 L108.7,220.2 L111.5,222.1 L113.4,223.9 L115.2,220.2 L117.0,223.9 L118.7,225.8 L121.5,224.8 L123.3,218.4 L125.2,217.4 L127.0,215.6 L128.8,212.8 L131.6,211.9 L133.5,208.2 L135.3,204.5 L137.2,202.7 L139.0,200.8 L140.8,198.1 L142.7,194.4 L145.4,192.5 L147.3,189.8 L150.1,187.9 L152.8,187.0 L154.7,187.9 L156.5,187.0 L158.4,190.7 L160.8,187.9 L162.6,187.0 L164.5,189.8 L166.3,187.9 L168.5,190.7 L170.4,188.8 L172.2,191.6 L174.4,193.4 L176.8,195.3 L178.7,197.1 L180.5,196.2 L182.4,199.9 L184.2,199.0 L186.1,206.4 L187.9,204.5 L189.8,216.5 L191.0,225.8 L192.5,205.4 L194.0,202.7 L195.7,226.7 L197.1,214.7 L198.4,210.1 L199.9,222.1 L201.7,212.8 L203.2,220.2 L204.5,214.7 L205.8,225.8 L207.3,231.3 L209.1,226.7 L211.0,229.4 L212.8,240.5 L214.7,230.4 L216.1,240.5 L217.6,232.2 L219.3,238.7 L221.1,231.3 L224.1,234.1 L225.9,235.9 L227.8,229.4 L229.6,225.8 L231.4,222.1 L233.3,213.8 L235.1,211.0 L237.0,204.5 L238.5,200.8 L240.3,196.2 L242.2,193.4 L244.0,190.7 L245.8,192.5 L247.7,188.8 L249.5,186.1 L251.4,188.8 L253.2,186.1 L255.1,187.0 L256.9,190.7 L258.8,187.9 L260.2,182.4 L261.7,192.5 L263.4,189.8 L265.2,196.2 L267.1,193.4 L268.9,197.1 L270.8,195.3 L272.6,206.4 L274.4,201.8 L276.3,217.4 L278.1,211.9 L280.0,205.4 L281.8,216.5 L283.7,212.8 L285.5,221.1 L287.4,217.4 L289.2,215.6 L291.1,223.9 L292.9,220.2 L294.8,217.4 L296.6,218.4 L298.4,215.6 L300.3,219.3 L302.1,214.7 L304.0,217.4 L305.3,222.1 L306.7,218.4 L308.6,215.6 L310.4,218.4 L312.3,212.8 L314.1,216.5 L316.0,222.1 L317.8,216.5 L319.7,211.9 L321.5,213.8 L323.4,217.4 L325.2,211.0 L327.1,204.5 L328.7,216.5 L330.5,222.1 L332.4,214.7 L334.2,223.9 L336.1,216.5 L337.6,227.6 L339.0,233.1 L340.5,235.0 L342.0,225.8 L343.5,221.1 L345.3,223.0 L347.1,220.2 L349.0,222.1 L350.8,226.7 L352.7,227.6 L354.5,223.9 L356.4,220.2 L358.2,216.5 L360.1,213.8 L361.9,211.9 L363.8,207.3 L365.6,202.7 L367.4,200.8 L369.3,196.2 L371.1,192.5 L373.0,187.9 L374.8,185.2 L376.7,187.0 L378.5,184.2 L380.4,186.1 L382.2,183.3 L384.1,181.5 L385.9,182.4 L387.8,176.8 L389.6,178.7 L391.4,185.2 L393.3,181.5 L395.1,186.1 L397.0,185.2 L398.8,190.7 L400.7,192.5 L402.5,197.1 L404.4,201.8 L406.2,206.4 L408.1,209.1 L409.9,211.9 L411.7,217.4 L413.6,215.6 L415.4,219.3 L417.3,216.5 L419.1,220.2 L421.0,225.8 L422.8,227.6 L424.7,222.1 L426.5,223.9 L428.4,227.6 L430.2,223.0 L432.1,226.7 L433.7,226.7 L435.5,231.3 L437.4,228.5 L439.2,233.1 L441.1,230.4 L442.9,234.1 L444.4,239.6 L445.9,234.1 L447.4,236.8 L448.8,230.4 L450.3,233.1 L452.1,227.6 L454.0,231.3 L455.8,223.9 L457.3,225.8 L458.8,216.5 L460.3,219.3 L461.7,223.9 L463.2,211.0 L464.7,209.1 L466.2,218.4 L467.6,209.1 L469.1,204.5 L470.6,203.6 L472.1,216.5 L473.6,211.0 L475.0,206.4 L476.5,208.2 L478.0,211.9 L479.8,208.2 L481.7,212.8 L483.5,215.6 L485.4,210.1 L487.2,208.2 L489.1,214.7 L490.9,212.8 L492.8,210.1 L494.6,213.8 L496.4,211.9 L498.3,211.0 L500.1,212.8 L502.0,211.4 L503.8,212.5 L505.7,211.0 L507.5,212.5 L509.4,211.4 L511.2,211.9 L513.0,211.0 L514.9,211.9 L516.7,211.4 L518.6,212.1 L520.4,211.4 L522.3,212.1 L524.1,211.5 L526.0,212.3 L527.8,211.4 L529.7,212.1 L532.4,211.4" stroke="#28e028" stroke-width="1" stroke-opacity="0.52"/>
<path d="M13.7,188.8 L14.6,207.3 L16.1,187.0 L17.0,206.4 L18.3,180.5 L19.6,183.3 L20.7,188.8 L22.0,208.2 L23.3,174.1 L24.2,168.5 L25.3,181.5 L26.6,191.6 L28.5,181.5 L29.9,174.1 L31.8,180.5 L34.0,182.4 L35.8,175.9 L37.7,184.2 L39.5,186.1 L41.4,180.5 L42.9,187.0 L44.1,188.8 L46.0,183.3 L47.8,186.1 L49.7,182.4 L51.5,186.1 L54.3,182.4 L56.1,180.5 L58.0,183.3 L59.5,180.5 L60.8,185.2 L62.2,189.8 L64.5,191.6 L66.3,189.8 L68.7,192.5 L70.9,193.4 L72.8,190.7 L74.6,192.5 L77.4,193.4 L80.1,194.4 L82.3,197.1 L84.8,195.3 L86.0,192.2 L87.5,195.3 L89.7,193.4 L91.2,191.6 L93.0,195.3 L94.9,196.2 L96.7,190.7 L99.0,191.6 L101.4,188.8 L103.2,186.1 L105.0,184.8 L106.9,186.1 L108.7,184.2 L110.6,183.3 L112.4,184.8 L114.3,183.3 L117.0,184.8 L117.8,185.2 L120.5,186.1 L123.3,182.4 L125.7,180.5 L127.9,186.1 L129.8,189.8 L132.5,190.7 L134.4,193.4 L136.2,195.3 L138.6,196.2 L140.5,202.7 L142.7,200.8 L144.5,205.4 L146.4,208.2 L148.2,214.7 L150.1,212.8 L151.9,211.9 L153.8,215.6 L156.0,216.9 L158.4,215.6 L160.2,212.8 L162.1,213.8 L163.9,210.1 L166.3,208.2 L168.5,206.4 L170.4,204.5 L172.6,202.7 L174.4,199.9 L176.8,200.8 L178.7,197.1 L180.5,196.2 L182.4,197.1 L184.2,193.4 L186.1,195.3 L187.9,190.7 L189.8,192.5 L191.6,199.9 L193.4,181.5 L194.4,177.8 L195.7,201.8 L197.1,190.7 L198.4,185.2 L199.9,192.5 L201.7,194.4 L203.6,191.6 L205.4,194.4 L207.3,195.3 L209.1,189.8 L211.0,193.4 L212.8,196.2 L214.7,192.5 L216.1,191.6 L217.6,198.1 L219.3,196.2 L221.1,194.4 L222.8,195.3 L225.5,190.7 L228.3,189.8 L230.2,191.6 L232.6,183.3 L234.4,190.7 L236.6,192.5 L238.5,197.1 L240.3,199.0 L242.2,202.7 L244.0,206.4 L245.8,209.1 L247.7,211.9 L249.5,213.8 L251.4,216.5 L254.1,215.6 L256.5,214.7 L258.4,212.8 L260.2,210.1 L262.1,211.9 L263.9,207.3 L265.8,202.7 L267.6,201.8 L269.5,199.0 L271.3,199.9 L273.5,188.8 L275.4,186.1 L277.2,192.5 L279.1,187.0 L280.9,184.2 L282.8,186.1 L285.0,185.2 L286.8,182.4 L288.7,180.5 L290.5,183.3 L292.4,181.5 L294.2,179.6 L296.6,181.5 L298.4,185.2 L300.3,186.1 L302.1,183.3 L304.0,187.0 L305.3,193.4 L306.7,190.7 L308.2,188.8 L310.1,194.4 L311.9,197.1 L313.8,201.8 L315.6,199.9 L317.8,199.0 L319.7,196.2 L321.1,187.9 L322.6,187.0 L324.3,194.4 L326.1,197.1 L328.7,199.0 L330.5,192.5 L332.0,177.8 L333.5,187.0 L335.0,198.1 L336.4,181.5 L337.9,170.4 L339.4,179.6 L340.9,190.7 L342.4,181.5 L343.8,172.2 L345.3,175.9 L347.1,179.6 L348.6,175.0 L350.5,173.2 L352.3,177.8 L354.2,180.5 L356.0,182.4 L357.9,186.1 L359.7,189.8 L361.5,190.7 L363.4,186.1 L365.2,192.5 L367.1,187.0 L368.9,188.8 L370.8,197.1 L372.2,202.7 L373.7,194.4 L375.2,205.4 L376.7,210.1 L378.1,204.5 L380.0,203.6 L381.9,214.7 L383.7,211.0 L385.5,212.8 L387.4,219.3 L389.2,222.1 L391.1,216.5 L392.9,215.6 L394.8,219.3 L396.6,223.9 L398.5,216.5 L400.3,218.4 L402.1,211.9 L404.0,208.2 L405.8,212.8 L407.7,202.7 L409.5,208.2 L411.4,205.4 L413.2,209.1 L415.1,212.8 L416.9,204.5 L418.8,201.8 L420.6,209.1 L422.4,212.8 L424.3,205.4 L426.1,211.9 L428.0,204.5 L429.8,207.3 L431.7,202.7 L433.3,193.4 L434.6,192.5 L435.9,200.8 L437.4,192.5 L439.2,187.0 L441.1,186.1 L442.9,183.3 L444.8,184.2 L446.6,181.5 L448.5,180.5 L450.3,178.7 L452.1,180.5 L454.0,177.8 L455.8,176.8 L457.7,181.5 L459.5,186.1 L461.4,181.5 L462.9,178.7 L464.7,184.2 L466.5,185.2 L468.8,186.1 L470.6,188.8 L472.4,190.7 L474.3,189.8 L476.1,187.9 L478.0,191.6 L479.8,187.9 L481.7,186.1 L483.5,188.8 L485.4,191.6 L487.2,187.9 L489.1,188.8 L490.9,192.5 L492.8,187.0 L494.2,186.1 L495.7,190.7 L497.4,187.0 L499.2,187.0 L501.1,188.8 L502.9,188.8 L504.8,192.5 L506.6,193.4 L508.4,192.5 L510.3,190.7 L512.1,191.6 L514.0,190.7 L515.8,189.8 L517.7,189.8 L519.5,190.7 L521.4,190.7 L523.2,189.8 L525.0,190.7 L526.9,191.6 L528.7,190.7 L530.6,191.6 L532.4,191.1" stroke="#2020c0" stroke-width="1" stroke-opacity="0.76"/>
</g>
<line x1="13.0" y1="228.4" x2="532.2" y2="228.4" stroke="#000" stroke-width="1.4"/>
<line x1="13.5" y1="166" x2="13.5" y2="261.1" stroke="#222" stroke-width="1"/>
<text transform="translate(10.9,212.7) rotate(-90)" text-anchor="middle" font-size="10" fill="#111" textLength="20.3" lengthAdjust="spacingAndGlyphs">m/s2</text>
<text x="263.75" y="270.1" font-size="10.3" fill="#000" stroke="#000" stroke-width="0.22" text-anchor="start" textLength="18.7" lengthAdjust="spacingAndGlyphs">Time</text>
<line x1="0" y1="274.5" x2="532.5" y2="274.5" stroke="#b9b9b9" stroke-width="1"/>
<line x1="0" y1="275.5" x2="532.5" y2="275.5" stroke="#fafafa" stroke-width="1"/>
<text x="235.75" y="283.3" font-size="9.7" fill="#000" stroke="#000" stroke-width="0.22" text-anchor="start" textLength="63" lengthAdjust="spacingAndGlyphs">Angular velocity</text>
<rect x="17.5" y="288.0" width="10.5" height="10.5" fill="#ffffff" stroke="#d9d9d9" stroke-width="1"/>
<path d="M19.6,293.1 L21.9,296.1 L25.8,289.7" fill="none" stroke="#000" stroke-width="1.45" stroke-linejoin="miter"/>
<rect x="33" y="288.5" width="8.7" height="8.7" fill="#ff0000"/>
<text x="44.5" y="296.7" font-size="9.7" fill="#000" stroke="#000" stroke-width="0.22" text-anchor="start" textLength="37.5" lengthAdjust="spacingAndGlyphs">Ang vel X</text>
<rect x="189.5" y="288.0" width="10.5" height="10.5" fill="#ffffff" stroke="#d9d9d9" stroke-width="1"/>
<path d="M191.6,293.1 L193.9,296.1 L197.8,289.7" fill="none" stroke="#000" stroke-width="1.45" stroke-linejoin="miter"/>
<rect x="205" y="288.5" width="8.7" height="8.7" fill="#00ff00"/>
<text x="216.5" y="296.7" font-size="9.7" fill="#000" stroke="#000" stroke-width="0.22" text-anchor="start" textLength="37" lengthAdjust="spacingAndGlyphs">Ang vel Y</text>
<rect x="361.0" y="288.0" width="10.5" height="10.5" fill="#ffffff" stroke="#d9d9d9" stroke-width="1"/>
<path d="M363.1,293.1 L365.4,296.1 L369.3,289.7" fill="none" stroke="#000" stroke-width="1.45" stroke-linejoin="miter"/>
<rect x="376.5" y="288.5" width="8.7" height="8.7" fill="#0000ff"/>
<text x="388.0" y="296.7" font-size="9.7" fill="#000" stroke="#000" stroke-width="0.22" text-anchor="start" textLength="37" lengthAdjust="spacingAndGlyphs">Ang vel Z</text>
<rect x="13.0" y="300.2" width="519.5" height="95.5" fill="#ffffff"/>
<line x1="65.5" y1="300.2" x2="65.5" y2="395.7" stroke="#d4d4d4" stroke-width="1" stroke-dasharray="1.2 1.2"/>
<line x1="117.375" y1="300.2" x2="117.375" y2="395.7" stroke="#d4d4d4" stroke-width="1" stroke-dasharray="1.2 1.2"/>
<line x1="169.25" y1="300.2" x2="169.25" y2="395.7" stroke="#d4d4d4" stroke-width="1" stroke-dasharray="1.2 1.2"/>
<line x1="221.125" y1="300.2" x2="221.125" y2="395.7" stroke="#d4d4d4" stroke-width="1" stroke-dasharray="1.2 1.2"/>
<line x1="273.0" y1="300.2" x2="273.0" y2="395.7" stroke="#d4d4d4" stroke-width="1" stroke-dasharray="1.2 1.2"/>
<line x1="324.875" y1="300.2" x2="324.875" y2="395.7" stroke="#d4d4d4" stroke-width="1" stroke-dasharray="1.2 1.2"/>
<line x1="376.75" y1="300.2" x2="376.75" y2="395.7" stroke="#d4d4d4" stroke-width="1" stroke-dasharray="1.2 1.2"/>
<line x1="428.625" y1="300.2" x2="428.625" y2="395.7" stroke="#d4d4d4" stroke-width="1" stroke-dasharray="1.2 1.2"/>
<line x1="480.5" y1="300.2" x2="480.5" y2="395.7" stroke="#d4d4d4" stroke-width="1" stroke-dasharray="1.2 1.2"/>
<line x1="13.0" y1="308.4" x2="532.5" y2="308.4" stroke="#d4d4d4" stroke-width="1" stroke-dasharray="1.2 1.2"/>
<line x1="13.0" y1="324.8" x2="532.5" y2="324.8" stroke="#d4d4d4" stroke-width="1" stroke-dasharray="1.2 1.2"/>
<line x1="13.0" y1="357.7" x2="532.5" y2="357.7" stroke="#d4d4d4" stroke-width="1" stroke-dasharray="1.2 1.2"/>
<line x1="13.0" y1="374.1" x2="532.5" y2="374.1" stroke="#d4d4d4" stroke-width="1" stroke-dasharray="1.2 1.2"/>
<line x1="13.0" y1="390.5" x2="532.5" y2="390.5" stroke="#d4d4d4" stroke-width="1" stroke-dasharray="1.2 1.2"/>
<text x="14.8" y="317.09999999999997" font-size="9.7" fill="#222" stroke="#222" stroke-width="0.22" text-anchor="start" textLength="14.2" lengthAdjust="spacingAndGlyphs">200</text>
<text x="14.8" y="333.5" font-size="9.7" fill="#222" stroke="#222" stroke-width="0.22" text-anchor="start" textLength="14.2" lengthAdjust="spacingAndGlyphs">100</text>
<text x="14.8" y="349.95" font-size="9.7" fill="#222" stroke="#222" stroke-width="0.22" text-anchor="start" textLength="4.6" lengthAdjust="spacingAndGlyphs">0</text>
<text x="14.8" y="366.4" font-size="9.7" fill="#222" stroke="#222" stroke-width="0.22" text-anchor="start" textLength="17.5" lengthAdjust="spacingAndGlyphs">-100</text>
<text x="14.8" y="382.8" font-size="9.7" fill="#222" stroke="#222" stroke-width="0.22" text-anchor="start" textLength="17.5" lengthAdjust="spacingAndGlyphs">-200</text>
<text x="68.2" y="394.4" font-size="9.7" fill="#222" stroke="#222" stroke-width="0.22" text-anchor="start" textLength="35.5" lengthAdjust="spacingAndGlyphs">1:32.872</text>
<text x="120.075" y="394.4" font-size="9.7" fill="#222" stroke="#222" stroke-width="0.22" text-anchor="start" textLength="35.5" lengthAdjust="spacingAndGlyphs">1:33.872</text>
<text x="171.95" y="394.4" font-size="9.7" fill="#222" stroke="#222" stroke-width="0.22" text-anchor="start" textLength="35.5" lengthAdjust="spacingAndGlyphs">1:34.872</text>
<text x="223.825" y="394.4" font-size="9.7" fill="#222" stroke="#222" stroke-width="0.22" text-anchor="start" textLength="35.5" lengthAdjust="spacingAndGlyphs">1:35.872</text>
<text x="275.7" y="394.4" font-size="9.7" fill="#222" stroke="#222" stroke-width="0.22" text-anchor="start" textLength="35.5" lengthAdjust="spacingAndGlyphs">1:36.872</text>
<text x="327.575" y="394.4" font-size="9.7" fill="#222" stroke="#222" stroke-width="0.22" text-anchor="start" textLength="35.5" lengthAdjust="spacingAndGlyphs">1:37.872</text>
<text x="379.45" y="394.4" font-size="9.7" fill="#222" stroke="#222" stroke-width="0.22" text-anchor="start" textLength="35.5" lengthAdjust="spacingAndGlyphs">1:38.872</text>
<text x="431.325" y="394.4" font-size="9.7" fill="#222" stroke="#222" stroke-width="0.22" text-anchor="start" textLength="35.5" lengthAdjust="spacingAndGlyphs">1:39.872</text>
<text x="483.2" y="394.4" font-size="9.7" fill="#222" stroke="#222" stroke-width="0.22" text-anchor="start" textLength="35.5" lengthAdjust="spacingAndGlyphs">1:40.872</text>
<clipPath id="cp2"><rect x="13.0" y="300.2" width="519.5" height="95.5"/></clipPath>
<g clip-path="url(#cp2)" fill="none" stroke-linejoin="round">
<path d="M13.7,332.1 L15.2,340.4 L16.6,333.9 L18.1,336.7 L19.6,350.5 L21.1,354.2 L22.6,345.0 L24.0,352.4 L25.5,370.8 L26.6,372.7 L28.1,363.4 L29.6,357.9 L31.0,360.7 L32.5,356.1 L34.0,358.8 L35.8,351.4 L37.7,352.4 L39.5,344.1 L41.4,347.8 L43.2,343.1 L45.1,340.4 L46.9,335.8 L48.8,330.2 L50.6,331.1 L52.5,324.7 L54.3,317.3 L56.1,319.1 L58.0,316.4 L59.5,314.5 L60.9,321.0 L62.8,326.5 L64.6,329.3 L66.5,332.1 L68.3,336.7 L70.2,335.8 L72.0,333.9 L73.9,338.5 L75.7,341.3 L77.5,338.5 L79.4,336.7 L81.2,333.0 L83.1,334.8 L84.9,333.9 L86.8,336.7 L88.6,333.9 L90.5,334.8 L92.3,338.5 L94.2,344.1 L96.0,341.3 L97.8,345.0 L99.7,346.5 L101.5,345.9 L103.4,341.3 L105.2,343.1 L107.1,345.9 L108.9,342.2 L110.8,345.9 L112.6,345.4 L114.5,342.2 L116.3,343.1 L118.7,339.4 L120.5,333.0 L122.0,326.5 L123.5,320.1 L125.0,319.1 L126.4,327.4 L127.9,334.8 L129.4,332.1 L130.9,327.4 L132.7,321.0 L134.6,316.4 L136.4,311.8 L137.9,311.4 L139.4,315.5 L141.2,316.4 L143.1,320.1 L144.9,321.0 L146.7,324.7 L148.6,327.4 L150.4,330.2 L152.3,331.1 L154.1,333.0 L156.0,335.8 L157.8,338.5 L159.7,340.4 L161.5,344.1 L163.4,346.8 L165.2,349.6 L167.1,351.4 L168.9,350.5 L170.7,352.4 L172.6,354.2 L174.4,355.1 L176.3,357.0 L178.1,357.9 L180.0,359.8 L181.8,360.7 L183.7,361.6 L185.5,360.7 L187.3,364.4 L189.2,368.1 L190.7,372.7 L191.8,365.3 L192.9,352.4 L194.0,335.8 L195.1,333.0 L196.2,345.9 L197.7,345.0 L199.5,345.9 L201.4,343.1 L203.2,341.3 L205.1,338.5 L206.9,336.7 L208.8,337.6 L210.6,335.8 L212.4,336.7 L214.3,334.8 L216.1,332.1 L217.6,327.4 L219.1,322.8 L220.6,324.7 L222.4,320.1 L223.7,317.3 L225.5,319.1 L227.4,315.5 L229.2,309.9 L230.7,302.5 L232.2,305.3 L233.7,313.6 L235.5,310.8 L237.3,312.7 L239.2,306.2 L240.7,305.9 L242.2,311.8 L244.0,317.3 L245.8,321.0 L247.7,325.6 L249.5,331.1 L251.4,333.0 L253.2,334.8 L255.1,336.7 L256.5,341.3 L258.0,352.4 L259.5,351.4 L261.0,356.1 L262.8,357.0 L264.7,356.1 L266.1,357.9 L267.6,350.5 L269.1,349.6 L270.6,357.9 L272.1,354.2 L273.5,351.4 L275.0,357.0 L276.5,354.2 L278.3,351.4 L280.2,348.7 L282.0,349.6 L283.9,346.8 L285.7,345.0 L287.6,345.9 L289.4,343.1 L291.2,341.3 L293.1,339.4 L294.9,341.3 L296.8,336.7 L298.6,337.6 L300.5,333.0 L302.3,326.5 L304.2,325.6 L306.0,321.0 L307.5,316.4 L309.0,321.0 L310.4,325.6 L311.9,320.1 L313.8,318.2 L315.6,316.4 L317.4,314.5 L318.9,315.5 L320.8,319.1 L322.6,334.8 L324.5,343.1 L326.3,336.7 L327.9,336.7 L329.4,345.0 L330.9,346.8 L332.4,354.2 L333.9,364.4 L335.3,352.4 L336.8,346.8 L338.3,357.9 L339.8,360.7 L341.2,352.4 L342.7,350.5 L344.2,357.0 L345.7,358.8 L347.1,354.2 L348.6,341.3 L350.1,338.5 L351.9,336.7 L353.8,331.1 L355.6,325.6 L357.5,319.1 L359.3,317.3 L361.2,318.2 L363.0,313.6 L364.9,312.7 L366.7,315.5 L368.6,313.6 L370.4,314.5 L372.2,311.8 L373.7,312.7 L375.2,320.1 L376.7,323.8 L378.1,319.1 L379.6,322.8 L381.1,326.5 L382.6,324.7 L384.1,321.0 L385.5,324.7 L387.0,328.4 L388.9,326.5 L390.7,329.3 L392.2,337.6 L393.7,347.8 L395.1,350.5 L396.6,352.4 L398.1,357.9 L399.2,372.7 L400.7,385.6 L402.1,389.3 L403.6,378.2 L405.1,376.4 L406.6,369.9 L408.1,361.6 L409.9,360.7 L411.7,362.5 L413.6,361.6 L415.4,368.1 L416.9,374.5 L418.4,365.3 L419.9,355.1 L421.3,360.7 L422.8,366.2 L424.7,362.5 L426.5,359.8 L428.0,353.3 L429.5,355.1 L431.3,360.7 L432.9,355.1 L434.4,358.8 L435.9,356.1 L437.4,352.4 L438.9,353.3 L440.3,348.7 L441.8,345.9 L443.3,343.1 L444.8,339.4 L446.2,335.8 L447.7,333.0 L449.2,329.3 L450.7,326.5 L452.1,324.7 L453.6,325.6 L455.1,322.8 L456.6,329.3 L458.1,330.2 L459.5,321.0 L461.0,318.2 L462.5,326.5 L464.0,329.3 L465.4,324.7 L466.9,333.0 L468.4,334.8 L469.9,332.1 L471.3,336.7 L472.8,338.5 L474.3,340.4 L475.8,342.2 L477.2,344.1 L478.7,346.8 L480.2,345.4 L481.7,344.1 L483.1,342.2 L484.6,345.0 L486.1,345.9 L487.6,340.4 L489.1,339.4 L490.5,343.1 L492.0,342.2 L493.5,340.4 L495.0,341.3 L496.4,342.2 L497.9,340.4 L499.4,341.3 L500.9,342.2 L502.4,340.9 L503.8,344.1 L505.3,345.9 L506.8,343.1 L508.3,341.3 L509.7,342.2 L511.2,340.9 L513.0,341.7 L514.9,341.3 L516.7,341.9 L518.6,341.3 L520.4,341.7 L522.3,341.3 L524.1,341.5 L526.0,341.3 L527.8,341.5 L529.7,341.3 L532.4,341.3" stroke="#e02828" stroke-width="1" stroke-opacity="0.64"/>
<path d="M13.7,315.5 L15.5,317.3 L17.4,321.0 L19.2,317.3 L21.1,318.2 L22.9,324.7 L24.8,329.3 L26.6,328.4 L28.5,331.1 L30.3,330.2 L32.1,333.9 L34.0,338.5 L35.8,352.4 L37.7,363.4 L39.5,360.7 L41.4,361.6 L42.9,350.5 L44.3,347.8 L46.2,342.2 L48.0,338.5 L49.9,336.7 L51.7,334.8 L53.6,336.7 L55.4,343.1 L57.2,348.7 L59.1,359.8 L60.6,363.4 L62.0,360.7 L63.9,354.2 L65.7,349.6 L67.6,351.4 L69.4,349.6 L71.3,346.8 L73.1,347.8 L75.0,346.8 L76.8,343.1 L78.7,336.7 L80.5,333.9 L82.3,333.0 L84.2,327.4 L86.0,330.2 L87.9,332.1 L89.7,334.8 L91.6,336.7 L93.4,333.0 L95.3,329.3 L97.1,327.4 L99.0,322.8 L100.8,323.8 L102.7,322.8 L104.5,324.7 L106.3,325.6 L108.2,327.4 L110.0,324.7 L111.9,326.5 L113.7,329.3 L115.6,327.4 L117.4,330.2 L118.7,333.0 L120.5,332.1 L122.4,331.1 L124.2,333.0 L126.1,333.9 L127.9,335.8 L129.8,334.8 L131.6,335.8 L133.5,334.8 L135.3,335.8 L137.2,336.7 L139.0,338.5 L140.8,338.5 L142.7,340.4 L144.5,343.1 L146.4,345.9 L148.2,346.8 L150.1,349.6 L151.9,354.2 L153.8,357.0 L155.2,352.4 L156.7,356.1 L158.6,361.6 L160.4,359.8 L162.2,362.5 L164.1,360.7 L165.9,365.3 L167.8,363.4 L169.6,360.7 L171.5,361.6 L173.3,358.8 L175.2,359.8 L177.0,357.0 L178.9,356.1 L180.7,357.9 L182.6,357.0 L184.4,357.9 L186.2,356.1 L188.1,357.0 L189.9,355.1 L191.8,352.4 L193.6,350.5 L195.5,348.7 L197.3,347.8 L199.2,345.9 L201.0,346.8 L202.8,344.1 L204.7,345.0 L206.5,342.2 L208.4,344.1 L210.2,345.9 L212.1,344.1 L213.9,345.0 L215.8,343.1 L217.6,338.5 L219.5,336.7 L221.3,333.9 L223.7,330.2 L225.5,328.4 L227.4,329.3 L229.2,330.2 L231.1,333.9 L232.9,336.7 L234.8,337.6 L236.6,338.5 L238.5,336.7 L240.3,336.7 L242.2,337.2 L244.0,336.7 L245.8,336.1 L247.7,335.8 L249.5,334.8 L251.4,332.1 L253.2,331.1 L255.1,330.2 L256.9,329.9 L258.8,333.9 L260.6,338.5 L262.4,339.4 L264.3,345.0 L266.1,347.8 L268.0,350.5 L269.8,349.6 L271.7,352.4 L273.5,351.4 L275.4,356.1 L277.2,359.8 L279.1,358.8 L280.9,359.8 L282.8,358.8 L284.6,357.9 L286.4,357.0 L288.3,357.5 L290.1,357.0 L292.0,357.9 L293.8,357.0 L295.7,359.8 L297.5,357.9 L299.4,357.0 L301.2,362.5 L303.1,361.6 L304.9,356.1 L306.7,350.5 L308.6,349.6 L310.4,346.8 L312.3,341.3 L314.1,336.7 L316.0,329.3 L317.8,327.4 L319.7,319.1 L321.5,315.5 L323.4,322.8 L325.2,326.5 L327.1,321.0 L328.7,320.1 L330.5,316.4 L332.4,322.8 L334.2,325.6 L336.1,323.8 L337.9,327.4 L339.8,330.2 L341.6,333.0 L343.5,335.8 L345.3,337.6 L347.1,341.3 L349.0,345.9 L350.8,351.4 L352.7,352.4 L354.5,349.6 L356.4,346.8 L358.2,345.0 L360.1,341.3 L361.9,342.2 L363.8,343.1 L365.6,340.4 L367.4,341.3 L369.3,338.5 L371.1,340.4 L373.0,338.5 L374.8,336.7 L376.7,334.8 L378.5,335.8 L380.4,333.9 L382.2,332.1 L384.1,331.1 L385.9,333.0 L387.8,333.9 L389.6,331.1 L391.4,336.7 L393.3,343.1 L395.1,347.8 L397.0,350.5 L398.8,353.3 L400.7,356.1 L402.5,355.1 L404.4,357.0 L406.2,355.1 L408.1,357.0 L409.9,356.1 L411.7,355.1 L413.6,353.3 L415.4,350.5 L417.3,346.8 L419.1,344.1 L421.0,340.4 L422.8,338.5 L424.7,335.8 L426.5,333.0 L428.4,329.3 L430.2,324.7 L432.1,318.2 L433.7,320.1 L435.5,316.4 L437.4,315.5 L439.2,316.4 L441.1,317.3 L442.9,319.1 L444.8,321.0 L446.6,322.8 L448.5,325.6 L450.3,329.3 L452.1,333.0 L454.0,335.8 L455.8,338.5 L457.7,341.3 L459.5,340.4 L461.4,341.3 L462.9,345.9 L464.3,349.6 L466.2,348.7 L468.0,346.8 L469.9,345.9 L471.7,345.0 L473.6,344.1 L475.4,345.0 L477.2,344.6 L479.1,345.9 L480.9,344.1 L482.8,343.1 L484.6,344.1 L486.5,342.2 L488.3,343.1 L490.2,341.3 L492.0,342.2 L493.9,341.3 L495.7,342.2 L497.6,341.3 L499.4,343.1 L501.2,344.1 L503.1,345.4 L504.9,346.8 L506.8,345.9 L508.6,344.1 L510.5,343.1 L512.3,341.7 L514.2,342.2 L516.0,341.3 L517.9,341.9 L519.7,341.3 L521.5,341.7 L523.4,341.3 L525.2,341.5 L527.1,341.3 L529.7,341.3 L532.4,341.3" stroke="#28e028" stroke-width="1" stroke-opacity="0.52"/>
<path d="M13.7,339.4 L15.5,348.7 L17.4,350.5 L19.2,354.2 L21.1,357.9 L22.9,360.7 L24.8,359.8 L26.6,362.5 L28.5,359.8 L30.3,360.7 L32.1,364.4 L34.0,368.1 L35.8,372.7 L37.7,374.5 L39.5,372.7 L41.4,367.1 L43.2,361.6 L45.1,360.7 L46.9,358.8 L48.8,356.1 L50.6,357.0 L52.5,353.3 L54.3,350.5 L56.1,345.9 L57.6,346.8 L59.1,352.4 L60.6,356.1 L62.0,351.4 L63.9,348.7 L65.7,345.0 L67.6,344.1 L69.4,345.9 L71.3,343.1 L73.1,342.2 L75.0,343.1 L76.8,340.4 L78.7,335.8 L80.5,330.2 L82.0,315.5 L83.5,306.2 L84.9,304.4 L86.4,313.6 L87.9,324.7 L89.7,328.4 L91.6,331.1 L93.4,324.7 L94.9,319.1 L96.4,322.8 L98.2,327.4 L100.1,331.1 L101.9,330.2 L103.8,333.9 L105.6,335.8 L107.8,334.8 L110.6,335.8 L113.4,337.6 L116.1,338.5 L118.7,342.2 L120.5,350.5 L122.4,357.9 L123.9,362.5 L125.3,357.9 L127.2,352.4 L129.0,346.8 L130.9,349.6 L132.7,350.5 L134.6,348.7 L136.4,347.8 L138.3,345.0 L140.1,343.1 L141.9,340.4 L143.8,338.5 L146.4,339.4 L149.1,340.4 L151.9,340.4 L154.7,338.5 L157.4,337.6 L160.2,336.7 L163.0,336.7 L165.8,335.8 L168.5,334.8 L170.4,333.9 L172.2,336.7 L174.1,337.6 L175.9,338.5 L177.8,345.0 L179.6,354.2 L181.1,355.1 L182.6,352.4 L184.0,344.1 L185.1,336.7 L186.6,340.4 L188.1,341.3 L189.6,347.8 L191.0,356.1 L192.2,352.4 L193.3,338.5 L194.4,331.1 L195.5,342.2 L196.9,345.0 L198.4,337.6 L200.3,331.1 L202.1,324.7 L203.6,316.4 L205.1,307.1 L206.5,306.2 L208.0,309.9 L209.5,309.0 L211.0,314.5 L212.8,320.1 L214.3,323.8 L215.8,316.4 L217.2,321.9 L218.7,327.4 L220.6,326.5 L222.4,331.1 L223.7,333.0 L225.5,333.9 L227.4,332.1 L229.2,339.4 L231.1,344.1 L232.6,347.8 L234.0,344.1 L235.9,346.8 L237.7,348.7 L239.6,347.8 L241.4,350.5 L243.3,346.8 L245.1,347.8 L246.9,348.7 L248.8,347.8 L250.6,350.5 L252.5,351.4 L254.3,355.1 L256.2,357.0 L258.0,358.8 L259.9,359.8 L261.7,356.1 L263.6,357.0 L265.4,358.8 L266.9,368.1 L268.4,373.6 L269.8,370.8 L271.7,364.4 L273.5,357.9 L275.0,354.2 L276.5,357.9 L278.3,355.1 L280.2,352.4 L282.0,350.5 L283.9,346.8 L285.7,347.8 L287.6,344.1 L289.4,342.2 L291.2,340.4 L293.1,336.7 L294.9,333.0 L296.4,326.5 L297.9,323.8 L299.4,326.5 L300.8,324.7 L302.3,329.3 L304.2,330.2 L306.0,327.4 L307.9,328.4 L309.7,325.6 L311.5,326.5 L313.4,322.8 L315.2,321.9 L317.1,324.7 L318.9,330.2 L320.8,331.1 L322.6,336.7 L324.1,327.4 L325.6,326.5 L327.1,335.8 L328.3,339.4 L329.8,343.1 L331.6,345.0 L333.5,348.7 L335.0,352.4 L336.4,356.1 L337.9,363.4 L339.4,368.1 L340.9,373.6 L342.4,374.5 L344.2,369.9 L346.0,365.3 L347.9,360.7 L349.7,358.8 L351.6,357.0 L353.4,352.4 L355.3,349.6 L357.1,345.9 L359.0,342.2 L360.8,340.4 L362.6,339.4 L364.1,333.0 L365.6,331.1 L367.1,338.5 L368.6,340.4 L370.0,333.9 L371.5,331.1 L373.0,336.7 L374.5,338.5 L375.9,333.9 L377.4,336.7 L378.9,342.2 L380.4,343.1 L381.9,341.3 L383.3,340.4 L384.8,345.0 L386.3,341.3 L387.8,333.0 L389.2,328.4 L390.7,323.8 L392.2,318.2 L393.7,316.4 L395.1,317.3 L396.6,323.8 L398.1,324.7 L399.6,321.9 L401.0,321.0 L402.5,325.6 L404.4,331.1 L406.2,336.7 L408.1,337.6 L409.9,335.8 L411.7,337.6 L413.6,343.1 L415.4,349.6 L417.3,345.9 L419.1,341.3 L421.0,342.2 L422.8,345.9 L424.7,346.8 L426.5,345.0 L428.4,345.9 L430.2,348.7 L432.1,347.8 L433.3,341.3 L434.8,345.9 L436.3,342.2 L437.8,343.1 L439.2,338.5 L440.7,336.7 L442.2,334.8 L443.7,333.9 L445.1,332.1 L446.6,331.1 L448.1,329.3 L449.6,330.2 L451.4,329.3 L453.3,330.2 L455.1,331.1 L456.9,332.1 L458.4,328.4 L459.9,324.7 L461.4,332.1 L462.9,333.0 L464.3,323.8 L465.8,324.7 L467.3,332.1 L468.8,333.9 L470.2,324.7 L471.7,330.2 L473.2,333.0 L474.7,329.3 L476.1,331.1 L477.6,333.9 L479.1,335.8 L480.6,334.8 L482.1,337.6 L483.5,341.3 L485.0,340.4 L486.5,343.1 L487.9,341.3 L489.4,342.2 L490.9,344.1 L492.8,341.3 L494.6,340.4 L496.4,341.3 L498.3,342.2 L500.1,340.4 L502.0,341.3 L503.8,339.8 L505.7,342.2 L507.5,341.3 L509.4,342.8 L511.2,342.2 L513.0,340.9 L514.9,341.7 L516.7,341.3 L518.6,341.9 L520.4,341.3 L522.3,341.7 L524.1,341.3 L526.0,341.5 L527.8,341.3 L529.7,341.3 L532.4,341.3" stroke="#2020c0" stroke-width="1" stroke-opacity="0.76"/>
</g>
<line x1="13.0" y1="341.2" x2="532.2" y2="341.2" stroke="#000" stroke-width="1.4"/>
<line x1="13.5" y1="300.2" x2="13.5" y2="396.2" stroke="#222" stroke-width="1"/>
<text transform="translate(10.9,346.6) rotate(-90)" text-anchor="middle" font-size="10" fill="#111" textLength="21.6" lengthAdjust="spacingAndGlyphs">deg/s</text>
<text x="263.75" y="405.1" font-size="10.3" fill="#000" stroke="#000" stroke-width="0.22" text-anchor="start" textLength="18.7" lengthAdjust="spacingAndGlyphs">Time</text>
<line x1="0" y1="409.25" x2="532.5" y2="409.25" stroke="#b9b9b9" stroke-width="1"/>
<line x1="0" y1="410.25" x2="532.5" y2="410.25" stroke="#fafafa" stroke-width="1"/>
<text x="240" y="418.7" font-size="9.7" fill="#000" stroke="#000" stroke-width="0.22" text-anchor="start" textLength="54.25" lengthAdjust="spacingAndGlyphs">Magnetic field</text>
<rect x="17.5" y="423.0" width="10.5" height="10.5" fill="#ffffff" stroke="#d9d9d9" stroke-width="1"/>
<path d="M19.6,428.1 L21.9,431.1 L25.8,424.7" fill="none" stroke="#000" stroke-width="1.45" stroke-linejoin="miter"/>
<rect x="33" y="423.5" width="8.7" height="8.7" fill="#ff0000"/>
<text x="44.5" y="431.7" font-size="9.7" fill="#000" stroke="#000" stroke-width="0.22" text-anchor="start" textLength="23.7" lengthAdjust="spacingAndGlyphs">Mag X</text>
<rect x="146.5" y="423.0" width="10.5" height="10.5" fill="#ffffff" stroke="#d9d9d9" stroke-width="1"/>
<path d="M148.6,428.1 L150.9,431.1 L154.8,424.7" fill="none" stroke="#000" stroke-width="1.45" stroke-linejoin="miter"/>
<rect x="162" y="423.5" width="8.7" height="8.7" fill="#00ff00"/>
<text x="173.5" y="431.7" font-size="9.7" fill="#000" stroke="#000" stroke-width="0.22" text-anchor="start" textLength="23.7" lengthAdjust="spacingAndGlyphs">Mag Y</text>
<rect x="275.8" y="423.0" width="10.5" height="10.5" fill="#ffffff" stroke="#d9d9d9" stroke-width="1"/>
<path d="M277.90000000000003,428.1 L280.2,431.1 L284.1,424.7" fill="none" stroke="#000" stroke-width="1.45" stroke-linejoin="miter"/>
<rect x="291.3" y="423.5" width="8.7" height="8.7" fill="#0000ff"/>
<text x="302.8" y="431.7" font-size="9.7" fill="#000" stroke="#000" stroke-width="0.22" text-anchor="start" textLength="23" lengthAdjust="spacingAndGlyphs">Mag Z</text>
<rect x="403.8" y="423.0" width="10.5" height="10.5" fill="#ffffff" stroke="#d9d9d9" stroke-width="1"/>
<path d="M405.90000000000003,428.1 L408.2,431.1 L412.1,424.7" fill="none" stroke="#000" stroke-width="1.45" stroke-linejoin="miter"/>
<rect x="419.3" y="423.5" width="8.7" height="8.7" fill="#000000"/>
<text x="430.8" y="431.7" font-size="9.7" fill="#000" stroke="#000" stroke-width="0.22" text-anchor="start" textLength="40.2" lengthAdjust="spacingAndGlyphs">Mag Norm</text>
<rect x="13.0" y="435" width="519.5" height="94.79999999999995" fill="#ffffff"/>
<line x1="65.5" y1="435" x2="65.5" y2="529.8" stroke="#d4d4d4" stroke-width="1" stroke-dasharray="1.2 1.2"/>
<line x1="117.375" y1="435" x2="117.375" y2="529.8" stroke="#d4d4d4" stroke-width="1" stroke-dasharray="1.2 1.2"/>
<line x1="169.25" y1="435" x2="169.25" y2="529.8" stroke="#d4d4d4" stroke-width="1" stroke-dasharray="1.2 1.2"/>
<line x1="221.125" y1="435" x2="221.125" y2="529.8" stroke="#d4d4d4" stroke-width="1" stroke-dasharray="1.2 1.2"/>
<line x1="273.0" y1="435" x2="273.0" y2="529.8" stroke="#d4d4d4" stroke-width="1" stroke-dasharray="1.2 1.2"/>
<line x1="324.875" y1="435" x2="324.875" y2="529.8" stroke="#d4d4d4" stroke-width="1" stroke-dasharray="1.2 1.2"/>
<line x1="376.75" y1="435" x2="376.75" y2="529.8" stroke="#d4d4d4" stroke-width="1" stroke-dasharray="1.2 1.2"/>
<line x1="428.625" y1="435" x2="428.625" y2="529.8" stroke="#d4d4d4" stroke-width="1" stroke-dasharray="1.2 1.2"/>
<line x1="480.5" y1="435" x2="480.5" y2="529.8" stroke="#d4d4d4" stroke-width="1" stroke-dasharray="1.2 1.2"/>
<line x1="13.0" y1="443.8" x2="532.5" y2="443.8" stroke="#d4d4d4" stroke-width="1" stroke-dasharray="1.2 1.2"/>
<line x1="13.0" y1="466.4" x2="532.5" y2="466.4" stroke="#d4d4d4" stroke-width="1" stroke-dasharray="1.2 1.2"/>
<line x1="13.0" y1="511.5" x2="532.5" y2="511.5" stroke="#d4d4d4" stroke-width="1" stroke-dasharray="1.2 1.2"/>
<text x="14.8" y="452.5" font-size="9.7" fill="#222" stroke="#222" stroke-width="0.22" text-anchor="start" textLength="12.8" lengthAdjust="spacingAndGlyphs">1.0</text>
<text x="14.8" y="475.09999999999997" font-size="9.7" fill="#222" stroke="#222" stroke-width="0.22" text-anchor="start" textLength="12.8" lengthAdjust="spacingAndGlyphs">0.5</text>
<text x="14.8" y="497.3" font-size="9.7" fill="#222" stroke="#222" stroke-width="0.22" text-anchor="start" textLength="12.8" lengthAdjust="spacingAndGlyphs">0.0</text>
<text x="14.8" y="520.2" font-size="9.7" fill="#222" stroke="#222" stroke-width="0.22" text-anchor="start" textLength="16.6" lengthAdjust="spacingAndGlyphs">-0.5</text>
<text x="68.2" y="528.5" font-size="9.7" fill="#222" stroke="#222" stroke-width="0.22" text-anchor="start" textLength="35.5" lengthAdjust="spacingAndGlyphs">1:32.890</text>
<text x="120.075" y="528.5" font-size="9.7" fill="#222" stroke="#222" stroke-width="0.22" text-anchor="start" textLength="35.5" lengthAdjust="spacingAndGlyphs">1:33.890</text>
<text x="171.95" y="528.5" font-size="9.7" fill="#222" stroke="#222" stroke-width="0.22" text-anchor="start" textLength="35.5" lengthAdjust="spacingAndGlyphs">1:34.890</text>
<text x="223.825" y="528.5" font-size="9.7" fill="#222" stroke="#222" stroke-width="0.22" text-anchor="start" textLength="35.5" lengthAdjust="spacingAndGlyphs">1:35.890</text>
<text x="275.7" y="528.5" font-size="9.7" fill="#222" stroke="#222" stroke-width="0.22" text-anchor="start" textLength="35.5" lengthAdjust="spacingAndGlyphs">1:36.890</text>
<text x="327.575" y="528.5" font-size="9.7" fill="#222" stroke="#222" stroke-width="0.22" text-anchor="start" textLength="35.5" lengthAdjust="spacingAndGlyphs">1:37.890</text>
<text x="379.45" y="528.5" font-size="9.7" fill="#222" stroke="#222" stroke-width="0.22" text-anchor="start" textLength="35.5" lengthAdjust="spacingAndGlyphs">1:38.890</text>
<text x="431.325" y="528.5" font-size="9.7" fill="#222" stroke="#222" stroke-width="0.22" text-anchor="start" textLength="35.5" lengthAdjust="spacingAndGlyphs">1:39.890</text>
<text x="483.2" y="528.5" font-size="9.7" fill="#222" stroke="#222" stroke-width="0.22" text-anchor="start" textLength="35.5" lengthAdjust="spacingAndGlyphs">1:40.890</text>
<clipPath id="cp3"><rect x="13.0" y="435" width="519.5" height="94.79999999999995"/></clipPath>
<g clip-path="url(#cp3)" fill="none" stroke-linejoin="round">
<path d="M13.7,486.4 L17.4,479.1 L21.1,471.7 L24.8,464.3 L28.5,458.8 L32.1,454.1 L34.5,452.9 L36.8,455.1 L39.5,460.6 L42.3,463.7 L45.1,463.4 L48.8,461.9 L52.5,461.0 L55.2,461.2 L58.0,463.4 L61.7,467.4 L65.4,469.8 L70.9,473.5 L76.4,476.3 L81.1,476.9 L85.7,480.0 L90.3,481.8 L94.0,482.4 L97.7,482.2 L101.4,479.1 L106.0,475.4 L111.5,470.8 L116.1,466.1 L118.7,463.0 L122.4,458.8 L126.1,454.5 L129.8,451.4 L133.5,448.6 L137.2,446.8 L140.8,446.4 L144.5,447.3 L148.2,448.2 L151.9,449.0 L155.6,450.5 L159.3,452.3 L163.0,454.5 L166.7,457.5 L170.4,461.2 L174.1,465.2 L177.8,468.5 L181.4,470.4 L185.1,473.5 L188.8,477.2 L192.5,480.4 L196.2,482.8 L199.9,485.5 L203.6,487.7 L207.3,489.2 L211.0,490.7 L214.7,491.1 L218.4,490.7 L222.1,489.2 L223.7,486.4 L227.4,483.7 L231.1,481.5 L234.8,480.0 L238.5,477.8 L242.2,475.4 L245.8,472.6 L249.5,469.8 L253.2,466.1 L256.9,461.5 L260.6,456.9 L264.3,451.4 L268.0,446.8 L270.8,444.0 L273.5,442.7 L276.3,444.0 L279.1,446.8 L282.8,450.5 L286.4,455.1 L290.1,459.7 L293.8,464.9 L297.5,469.8 L301.2,475.4 L304.9,480.4 L308.6,484.6 L312.3,488.3 L316.0,489.6 L319.7,488.9 L322.4,487.0 L325.2,485.9 L327.8,483.7 L330.5,479.6 L333.3,475.4 L336.1,470.8 L338.8,466.1 L341.6,462.4 L344.4,459.7 L347.1,458.2 L349.4,458.4 L351.8,460.1 L354.5,462.4 L357.3,463.7 L361.0,465.2 L364.7,465.8 L369.3,466.7 L373.9,467.4 L377.6,467.4 L381.3,466.7 L385.0,466.1 L387.8,467.1 L390.5,470.8 L393.3,475.4 L396.1,480.0 L398.8,484.6 L401.6,490.1 L404.4,494.4 L407.1,497.5 L409.9,499.4 L412.7,500.7 L415.4,501.8 L418.2,502.5 L421.0,502.7 L423.7,502.1 L426.5,500.7 L429.3,498.1 L432.1,494.4 L432.8,491.1 L435.5,484.6 L438.3,479.1 L441.1,473.5 L443.8,468.0 L446.6,463.4 L449.4,460.1 L452.1,458.2 L454.9,457.5 L457.7,457.8 L460.4,458.8 L463.2,459.7 L466.0,462.4 L468.8,465.2 L471.5,468.0 L474.3,470.8 L477.1,473.0 L479.8,475.0 L482.6,476.3 L485.4,477.0 L489.1,477.4 L492.8,477.4 L496.4,477.6 L500.1,478.5 L503.8,479.6 L506.6,480.4 L511.2,480.5 L518.6,480.5 L526.0,480.5 L532.4,480.5" stroke="#e03040" stroke-width="1" stroke-opacity="0.56"/>
<path d="M13.7,504.9 L17.4,509.5 L21.1,513.2 L24.8,512.3 L27.5,507.7 L30.3,500.3 L33.1,493.8 L35.8,488.3 L38.6,483.7 L41.4,480.9 L44.1,480.0 L46.9,480.4 L49.7,481.8 L52.5,485.5 L55.2,491.1 L58.0,496.6 L60.8,500.7 L63.5,503.1 L67.2,504.9 L71.8,506.8 L76.4,507.7 L81.1,508.2 L85.7,508.6 L90.3,508.2 L94.0,507.1 L97.7,505.5 L101.4,504.0 L106.0,502.7 L110.6,501.2 L115.2,500.7 L118.7,500.7 L121.5,502.1 L124.2,504.9 L127.0,505.8 L129.8,507.7 L132.5,510.4 L135.3,513.2 L139.0,516.0 L142.7,518.4 L146.4,519.7 L151.0,520.6 L155.6,521.5 L160.2,521.9 L164.8,522.1 L169.4,521.5 L173.1,519.7 L176.8,516.5 L179.6,513.2 L182.4,508.6 L185.1,504.0 L187.9,499.4 L190.7,495.7 L193.4,494.8 L196.2,493.8 L199.9,492.0 L203.6,489.2 L207.3,487.0 L211.0,484.2 L214.7,482.4 L217.4,482.2 L220.2,483.7 L222.8,487.4 L225.5,492.9 L228.3,499.4 L231.1,505.8 L233.8,511.4 L236.6,516.5 L239.4,520.2 L242.2,522.8 L244.9,524.3 L247.7,524.6 L250.4,524.6 L253.2,524.8 L256.0,524.3 L258.8,523.4 L261.5,522.1 L264.3,519.7 L267.1,516.0 L269.8,511.4 L272.6,505.8 L275.4,501.2 L278.1,497.5 L280.9,494.4 L283.7,492.0 L286.4,491.1 L290.1,491.1 L293.8,491.1 L297.5,491.1 L300.3,492.0 L303.1,494.8 L305.8,497.5 L308.6,501.2 L311.4,503.6 L314.1,505.8 L316.9,507.7 L319.7,510.4 L322.4,512.3 L325.2,512.6 L327.8,512.3 L330.5,511.4 L333.3,508.6 L336.1,505.8 L338.8,502.1 L341.6,498.4 L344.4,493.8 L347.1,490.1 L349.9,488.9 L352.7,488.9 L355.4,491.1 L358.2,495.7 L361.0,501.2 L363.8,506.8 L366.5,512.3 L369.3,516.9 L372.1,521.5 L374.8,524.3 L377.6,526.1 L380.4,527.6 L384.1,528.9 L387.8,529.5 L391.4,528.9 L395.1,527.0 L397.9,525.2 L400.7,522.4 L403.4,518.7 L406.2,514.7 L409.0,510.4 L411.7,506.8 L414.5,503.6 L417.3,500.7 L420.1,498.4 L422.8,496.2 L425.6,493.8 L428.4,492.0 L431.1,490.1 L432.8,486.4 L435.5,483.7 L438.3,480.9 L441.1,479.1 L443.8,478.1 L446.6,479.1 L449.4,482.8 L452.1,486.4 L454.9,491.1 L457.7,496.6 L460.4,501.2 L463.2,504.9 L466.0,507.3 L468.8,509.1 L471.5,510.3 L474.3,510.4 L477.1,510.1 L479.8,509.5 L483.5,508.8 L487.2,508.4 L490.9,508.4 L494.6,508.4 L498.3,508.4 L502.0,508.2 L507.5,508.0 L514.9,507.9 L522.3,507.7 L527.8,507.5 L532.4,507.3" stroke="#30e030" stroke-width="1" stroke-opacity="0.4"/>
<path d="M13.7,504.9 L17.4,506.8 L21.1,509.5 L24.8,513.2 L28.5,515.0 L32.1,516.9 L35.8,519.1 L39.5,521.0 L43.2,521.9 L46.9,521.5 L51.5,521.1 L56.1,520.6 L60.8,519.3 L65.4,518.4 L70.0,516.9 L74.6,516.0 L79.2,515.0 L83.8,513.8 L88.4,513.2 L92.1,512.6 L95.8,514.1 L99.5,516.0 L103.2,517.3 L106.9,518.2 L111.5,518.7 L116.1,518.4 L117.8,518.4 L120.5,517.8 L123.3,515.0 L126.1,512.3 L128.8,511.4 L131.6,509.1 L134.4,504.9 L137.2,499.4 L139.9,493.8 L142.7,489.2 L145.4,486.1 L148.2,484.1 L151.0,483.1 L153.8,482.8 L156.5,482.9 L159.3,484.6 L162.1,487.4 L164.8,490.7 L167.6,494.8 L170.4,498.8 L173.1,503.1 L175.9,506.8 L178.7,509.9 L181.4,512.8 L184.2,515.4 L187.0,517.5 L189.8,518.7 L192.5,519.3 L196.2,519.1 L199.9,518.7 L203.6,518.4 L207.3,517.8 L211.0,517.5 L215.6,517.3 L220.2,517.5 L223.7,518.7 L227.4,519.1 L230.2,517.8 L232.9,514.1 L235.7,508.6 L238.5,502.1 L241.2,495.7 L244.0,490.1 L246.8,486.4 L249.5,484.1 L252.3,482.8 L255.1,481.8 L257.8,482.2 L260.6,485.5 L263.4,489.2 L266.1,492.9 L268.9,496.6 L271.7,501.2 L274.4,504.9 L277.2,508.6 L280.0,511.4 L282.8,514.1 L285.5,516.5 L288.3,518.4 L291.1,519.7 L293.8,521.0 L296.6,521.9 L299.4,522.1 L302.1,521.5 L304.9,519.7 L307.7,517.8 L310.4,515.0 L313.2,512.3 L316.0,509.9 L318.7,508.0 L321.5,507.3 L323.7,507.1 L326.1,508.6 L327.8,508.6 L330.5,510.4 L333.3,513.2 L336.1,515.0 L338.8,516.5 L341.6,517.5 L344.4,518.4 L347.1,518.7 L349.9,519.1 L352.7,519.7 L355.4,520.2 L358.2,519.3 L361.0,517.8 L363.8,515.0 L366.5,511.4 L369.3,506.8 L372.1,501.2 L374.8,496.6 L377.6,492.0 L380.4,488.3 L383.1,484.6 L385.9,480.9 L388.7,477.2 L391.1,475.0 L393.3,474.8 L395.5,477.2 L397.9,480.9 L400.3,487.4 L402.5,492.9 L404.7,496.6 L407.1,499.4 L409.9,501.2 L412.7,501.8 L415.4,503.1 L418.2,504.4 L421.0,505.5 L423.7,507.7 L426.5,510.4 L429.3,513.2 L432.1,516.0 L432.8,515.0 L435.5,517.8 L438.3,519.7 L441.1,521.0 L443.8,521.5 L446.6,521.5 L449.4,521.0 L452.1,520.0 L454.9,519.1 L457.7,518.4 L460.4,517.3 L463.2,516.0 L466.0,514.5 L468.8,513.4 L471.5,512.6 L474.3,512.3 L477.1,512.5 L479.8,513.2 L482.6,513.8 L485.4,514.1 L490.9,514.1 L496.4,514.1 L503.8,514.3 L511.2,514.3 L518.6,514.3 L526.0,514.3 L532.4,514.3" stroke="#2828c0" stroke-width="1" stroke-opacity="0.68"/>
<path d="M13.7,457.8 L17.4,455.1 L21.1,451.4 L24.8,448.6 L28.5,446.4 L32.1,444.0 L34.9,443.4 L37.7,444.6 L40.5,446.4 L43.2,447.7 L46.9,446.8 L50.6,446.4 L54.3,446.4 L58.0,448.2 L61.7,450.1 L65.4,451.9 L70.9,453.2 L76.4,454.5 L81.1,455.1 L85.7,456.4 L90.3,457.5 L94.9,457.8 L98.6,457.5 L102.3,456.0 L107.8,453.8 L113.4,451.4 L119.6,448.6 L124.2,445.3 L128.8,443.1 L133.5,440.9 L138.1,439.0 L142.7,437.9 L147.3,437.5 L151.9,438.1 L156.5,439.0 L161.1,440.9 L165.8,443.4 L170.4,446.4 L175.0,449.5 L179.6,451.9 L184.2,453.8 L188.8,456.0 L193.4,457.5 L198.1,459.1 L202.7,460.1 L207.3,460.6 L211.9,460.6 L216.5,460.6 L221.1,460.2 L223.7,460.1 L227.4,459.1 L231.1,457.8 L234.8,456.4 L238.5,454.1 L242.2,451.4 L245.8,449.0 L249.5,446.8 L253.2,444.6 L256.9,442.7 L260.6,441.2 L264.3,439.9 L268.0,438.8 L271.7,438.1 L274.4,438.1 L277.2,438.8 L280.9,440.3 L284.6,442.1 L288.3,444.6 L292.0,446.8 L295.7,449.5 L299.4,452.3 L303.1,455.6 L306.7,458.4 L310.4,460.6 L314.1,461.5 L317.8,461.0 L321.5,459.7 L325.2,459.1 L328.7,458.2 L332.4,456.4 L336.1,453.2 L339.8,450.5 L343.5,447.7 L347.1,446.0 L349.9,445.8 L352.7,446.8 L356.4,448.6 L360.1,449.5 L363.8,450.1 L367.4,450.1 L371.1,449.2 L374.8,448.2 L378.5,446.8 L382.2,444.9 L385.0,444.0 L387.8,443.6 L390.5,444.9 L393.3,447.1 L396.1,449.5 L398.8,452.7 L401.6,456.9 L404.4,459.7 L408.1,462.4 L411.7,464.3 L415.4,465.2 L419.1,465.8 L422.8,465.8 L426.5,465.2 L430.2,463.4 L432.8,461.5 L435.5,458.8 L438.3,455.1 L441.1,451.4 L443.8,448.6 L446.6,446.8 L449.4,445.8 L452.1,445.5 L455.8,445.7 L459.5,446.4 L463.2,447.7 L466.9,449.5 L470.6,451.4 L474.3,452.9 L478.0,454.1 L481.7,455.1 L485.4,455.6 L489.1,455.6 L492.8,455.4 L496.4,455.3 L499.2,455.4 L502.0,456.2 L505.7,456.6 L511.2,456.6 L518.6,456.6 L526.0,456.6 L532.4,456.6" stroke="#202020" stroke-width="1" stroke-opacity="0.8"/>
</g>
<line x1="13.0" y1="488.6" x2="532.2" y2="488.6" stroke="#000" stroke-width="1.4"/>
<line x1="13.5" y1="435" x2="13.5" y2="530.3" stroke="#222" stroke-width="1"/>
<text transform="translate(10.9,482.3) rotate(-90)" text-anchor="middle" font-size="10" fill="#111" textLength="12.3" lengthAdjust="spacingAndGlyphs">AU</text>
<text x="263.75" y="539.6" font-size="10.3" fill="#000" stroke="#000" stroke-width="0.22" text-anchor="start" textLength="18.7" lengthAdjust="spacingAndGlyphs">Time</text>
</svg>
</body></html>
